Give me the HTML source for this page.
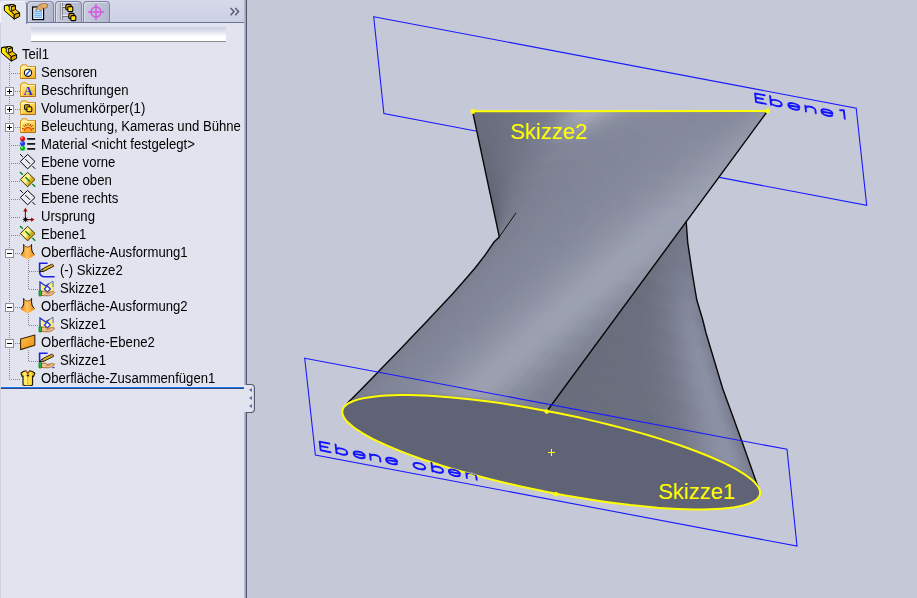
<!DOCTYPE html>
<html><head><meta charset="utf-8"><title>SolidWorks</title>
<style>
*{margin:0;padding:0;box-sizing:border-box}
html,body{width:917px;height:598px;overflow:hidden;background:#c5c9d7;font-family:"Liberation Sans",sans-serif}
#panel{position:absolute;left:0;top:0;width:244px;height:598px;background:#e1e4ee;overflow:hidden}
#tabs{position:absolute;left:0;top:0;width:244px;height:22px;background:linear-gradient(#d6d9e9,#cdd1e5)}
#tabline{position:absolute;left:26px;top:22px;width:218px;height:1px;background:#6a7492}
.tab{position:absolute;top:1px;height:21px;width:27px;border:1px solid #7f85a2;border-bottom:none;border-radius:4px 4px 0 0;background:linear-gradient(100deg,#cbcee0,#b3b7cb);box-shadow:inset 1px 1px 0 #d9dcea}
.tab.act{left:0;top:1px;width:27px;height:23px;background:linear-gradient(#e6e8f1,#e1e4ee);border-color:#f4f5fa #7f85a2 #e1e4ee #f4f5fa;box-shadow:none}
#search{position:absolute;left:31px;top:27px;width:195px;height:15px;background:linear-gradient(#cbcfe1 0%,#e2e5f0 35%,#ffffff 70%);border-bottom:1px solid #8c8c8c}
#edge1{position:absolute;left:244px;top:0;width:2px;height:598px;background:linear-gradient(90deg,#bcbfd2,#9a9db4)}
#edge2{position:absolute;left:246px;top:0;width:1px;height:598px;background:#4e5268}
#vpw{position:absolute;left:247px;top:0;width:670px;height:598px;background:#c5c9d7}
.t{position:absolute;font-size:14px;line-height:18px;height:18px;color:#000;white-space:nowrap;transform:scaleX(.937);transform-origin:0 0}
.ico{position:absolute;overflow:visible}
.hd{position:absolute;height:1px;background:repeating-linear-gradient(90deg,#858890 0 1px,transparent 1px 2px)}
.vd{position:absolute;width:1px;background:repeating-linear-gradient(180deg,#858890 0 1px,transparent 1px 2px)}
.exp{position:absolute;left:5px;width:9px;height:9px;border:1px solid #8a8e9c;background:#fff}
.exp .h{position:absolute;left:1px;top:3px;width:5px;height:1px;background:#000}
.exp .v{position:absolute;left:3px;top:1px;width:1px;height:5px;background:#000}
#lstrip{position:absolute;left:0;top:23px;width:1px;height:575px;background:#ced1e3}
#bline{position:absolute;left:1px;top:387px;width:244px;height:2px;background:linear-gradient(#1c74ec 0 50%,#2f4a86 50% 100%);box-shadow:0 -1px 0 #e9ebf3}
#hbg{position:absolute;left:244px;top:385px;width:3px;height:27px;background:#e1e4ee}
#handle{position:absolute;left:246px;top:384px;width:9px;height:29px;background:#e1e4ee;border:1px solid #565a70;border-left:none;border-radius:0 4px 4px 0;box-shadow:inset -1px 0 0 #c9ccda}
#handle i{position:absolute;left:3px;width:0;height:0;border:2.7px solid transparent;border-right:3.6px solid #6668aa;border-left:none}
#chev{position:absolute;left:229px;top:3px;font-size:15px;line-height:16px;color:#50546a}
</style></head><body>
<svg width="0" height="0" style="position:absolute"><defs>
<linearGradient id="py" x1="0" y1="0" x2="1" y2="1"><stop offset="0" stop-color="#fff600"/><stop offset=".5" stop-color="#ffe000"/><stop offset="1" stop-color="#eeb000"/></linearGradient>
<linearGradient id="fg" x1="0" y1="0" x2=".6" y2="1"><stop offset="0" stop-color="#fff3a8"/><stop offset=".5" stop-color="#ffdc5c"/><stop offset="1" stop-color="#f6b83a"/></linearGradient>
<linearGradient id="pg" x1="0" y1=".2" x2="1" y2=".8"><stop offset="0" stop-color="#ffe23a"/><stop offset=".45" stop-color="#fff6a0"/><stop offset=".7" stop-color="#d8a80a"/><stop offset="1" stop-color="#f6cc1a"/></linearGradient>
<linearGradient id="og" x1="0" y1="0" x2="1" y2="0"><stop offset="0" stop-color="#f07a00"/><stop offset=".45" stop-color="#ffc666"/><stop offset="1" stop-color="#f08200"/></linearGradient>
<linearGradient id="og2" x1="0" y1="0" x2="1" y2="1"><stop offset="0" stop-color="#ffc252"/><stop offset="1" stop-color="#ee8c0c"/></linearGradient>
<linearGradient id="kg" x1="0" y1="0" x2="1" y2="0"><stop offset="0" stop-color="#e6b400"/><stop offset=".3" stop-color="#fff27a"/><stop offset=".7" stop-color="#ffe23a"/><stop offset="1" stop-color="#d8a000"/></linearGradient>
<symbol id="i-part" viewBox="0 0 16 16" overflow="visible">
<g transform="translate(-1,-2)" stroke="#000" stroke-width="1" stroke-linejoin="round">
<path d="M1.4 3.9L4.2 3.1 6.4 5V7.8L11.2 12.6 16.6 10.8 12.5 7.4V3.8L10.4 2.5H6.6L6.2 3.1 4.2 3.1" fill="#f6c400"/>
<path d="M1.4 3.9V8.6L11.2 17.2V12.6L6.4 7.8V5L4.2 3.1Z" fill="url(#py)"/>
<path d="M11.2 12.6V17.2L16.6 14.4V10.8Z" fill="#dea400"/>
<path d="M6.6 2.6H10.4L12.5 3.8 8.2 4.7Z" fill="#fff21a"/>
<path d="M8.2 4.7L12.5 3.8V7.4L8.2 9.4Z" fill="#eeb400"/>
<path d="M6.6 2.6L8.2 4.7V9.4L6.4 7.8V5Z" fill="#fffbc8" stroke-width=".6"/>
</g>
<circle cx="9.6" cy="1.6" r=".5" fill="#5a3c00"/><circle cx="12.4" cy="9.4" r=".55" fill="#5a3c00"/><circle cx="10.2" cy="5.4" r=".5" fill="#5a3c00"/></symbol><symbol id="i-fold-sens" viewBox="0 0 16 16" overflow="visible">
<path d="M0.5 14.5V2.5H1.5L2 0.8H6.5L7.5 2.5H15.5V14.5Z" fill="url(#fg)" stroke="#d8942a" stroke-width="1"/>
<path d="M0.5 14.5H15.5V2.5" fill="none" stroke="#b46e14" stroke-width="1"/>
<path d="M1.5 13.5V3.5H14.5" fill="none" stroke="#fff6c0" stroke-width="1" opacity=".9"/>

<circle cx="8" cy="8.8" r="3.6" fill="#fff" stroke="#111" stroke-width="1.1"/>
<path d="M6 11L10.2 6.2" stroke="#1c50e0" stroke-width="1.3"/></symbol><symbol id="i-fold-a" viewBox="0 0 16 16" overflow="visible">
<path d="M0.5 14.5V2.5H1.5L2 0.8H6.5L7.5 2.5H15.5V14.5Z" fill="url(#fg)" stroke="#d8942a" stroke-width="1"/>
<path d="M0.5 14.5H15.5V2.5" fill="none" stroke="#b46e14" stroke-width="1"/>
<path d="M1.5 13.5V3.5H14.5" fill="none" stroke="#fff6c0" stroke-width="1" opacity=".9"/>

<text x="8" y="13.4" text-anchor="middle" font-family="Liberation Serif, serif" font-weight="bold" font-size="12.5" fill="#1a34d8">A</text></symbol><symbol id="i-fold-vol" viewBox="0 0 16 16" overflow="visible">
<path d="M0.5 14.5V2.5H1.5L2 0.8H6.5L7.5 2.5H15.5V14.5Z" fill="url(#fg)" stroke="#d8942a" stroke-width="1"/>
<path d="M0.5 14.5H15.5V2.5" fill="none" stroke="#b46e14" stroke-width="1"/>
<path d="M1.5 13.5V3.5H14.5" fill="none" stroke="#fff6c0" stroke-width="1" opacity=".9"/>

<rect x="4.6" y="4.8" width="5" height="5" rx="1.2" fill="#f2b400" stroke="#111" stroke-width="1.1"/>
<rect x="6.8" y="6.8" width="5" height="5" rx="1.2" fill="#ffd41a" stroke="#111" stroke-width="1.1"/></symbol><symbol id="i-fold-light" viewBox="0 0 16 16" overflow="visible">
<path d="M0.5 14.5V2.5H1.5L2 0.8H6.5L7.5 2.5H15.5V14.5Z" fill="url(#fg)" stroke="#d8942a" stroke-width="1"/>
<path d="M0.5 14.5H15.5V2.5" fill="none" stroke="#b46e14" stroke-width="1"/>
<path d="M1.5 13.5V3.5H14.5" fill="none" stroke="#fff6c0" stroke-width="1" opacity=".9"/>

<path d="M3.6 13.2A4.4 4.4 0 0 1 12.4 13.2Z" fill="#f04a10"/>
<path d="M5 13.2A3 3 0 0 1 11 13.2Z" fill="#ffb020"/>
<g stroke="#7a2a00" stroke-width=".9"><path d="M8 7.6V5.2M5 8.8L3.4 7M11 8.8L12.6 7M3.8 11L2 10.2M12.2 11L14 10.2M6.2 8L5.4 6M9.8 8L10.6 6"/></g></symbol><symbol id="i-mat" viewBox="0 0 16 16" overflow="visible">
<circle cx="2.6" cy="2.7" r="2.5" fill="#e01010"/><circle cx="1.9" cy="1.9" r=".9" fill="#ff9a9a"/>
<circle cx="2.6" cy="7.4" r="2.5" fill="#1838e0"/><circle cx="1.9" cy="6.6" r=".9" fill="#9ab0ff"/>
<circle cx="2.6" cy="12.2" r="2.5" fill="#10b020"/><circle cx="1.9" cy="11.4" r=".9" fill="#a0ffa8"/>
<g fill="#1a1a1a"><rect x="7.2" y="2" width="8" height="1.8"/><rect x="7.2" y="7" width="8" height="1.8"/><rect x="7.2" y="12" width="8" height="1.8"/></g></symbol><symbol id="i-plane" viewBox="0 0 16 16" overflow="visible">
<path d="M7.6 .4L15 7.5 7.6 14.8.3 7.5Z" fill="#e9ebf3" stroke="#000" stroke-width="1"/>
<path d="M0 0L2.8 2.8M5.4 5.2L10 9.8M12.4 12L15.2 14.8" stroke="#000" stroke-width="1"/></symbol><symbol id="i-planey" viewBox="0 0 16 16" overflow="visible">
<path d="M7.6 .4L15 7.5 7.6 14.8.3 7.5Z" fill="url(#pg)" stroke="#3a3000" stroke-width="1"/>
<path d="M0 0L2.8 2.8M5.4 5.2L10 9.8M12.4 12L15.2 14.8" stroke="#0a8a1a" stroke-width="1.5"/></symbol><symbol id="i-origin" viewBox="0 0 16 16" overflow="visible">
<g stroke="#8a0a0a" stroke-width="1.1" fill="#a00c0c">
<path d="M5.4 11.6V1.5M5.4 11.6H13"/>
<path d="M5.4 -.2L3.2 3.4H7.6Z" stroke="none"/><path d="M14.6 11.6L11 9.4V13.8Z" stroke="none"/></g>
<path d="M2.8 11.6H8M5.4 9V14.2M3.5 9.7L7.3 13.5M7.3 9.7L3.5 13.5" stroke="#000" stroke-width=".9"/></symbol><symbol id="i-loft" viewBox="0 0 16 16" overflow="visible">
<path d="M3.6 .3C4.6 2.2 5.8 3 7.6 3 9.4 3 10.6 2.2 11.6 .3 11.6 3 11.4 5 12 7 12.8 9 14.2 10 15 11 12.4 13 10 14.2 7.6 15.7 5.2 14.2 2.8 13 .6 11 1.4 10 2.6 9 3.4 7 4 5 3.6 3 3.6 .3Z" fill="url(#og)"/>
<path d="M3.6 .3C3.6 3 4 5 3.4 7 2.8 8.6 2 9.6 1.2 10.4M11.6 .3C11.6 3 11.4 5 12 7 12.6 8.6 13.4 9.6 14.4 10.4" fill="none" stroke="#111" stroke-width="1"/>
<path d="M3.6 .3C4.6 2.2 5.8 3 7.6 3 9.4 3 10.6 2.2 11.6 .3" fill="none" stroke="#3a2a10" stroke-width=".7"/></symbol><symbol id="i-sk2" viewBox="0 0 16 16" overflow="visible">
<path d="M9.6 1.2H1.6V9.5C1.6 13 3.6 14.8 7 14.8H16.6" fill="none" stroke="#1a1ee6" stroke-width="1.6"/>
<path d="M2 9.6L4.2 7 14.2 2 15.9 4.1 5.6 9.4Z" fill="#ffd61a" stroke="#000" stroke-width=".9" stroke-linejoin="round"/>
<path d="M13.1 2.6L14.2 2 15.9 4.1 14.8 4.7Z" fill="#f08a78" stroke="#7a3a30" stroke-width=".5"/>
<path d="M2 9.6L4.2 7 5.6 9.4Z" fill="#f0d8b0" stroke="#000" stroke-width=".7"/>
<path d="M5.2 8.2L14.4 3.4" stroke="#c89000" stroke-width=".7"/>
</symbol><symbol id="i-sk1" viewBox="0 0 16 16" overflow="visible">
<path d="M2 2L7.6 6 15 1.2 15.4 13.2H2Z" fill="#fff27a" stroke="#d8c23a" stroke-width=".6"/>
<path d="M2 12V2L7.6 6 11 3.8" fill="none" stroke="#1a2ee0" stroke-width="1.3"/><path d="M11 3.8L15 1.2V7" fill="none" stroke="#3a5ae0" stroke-width=".8"/>
<path d="M9.4 6L12.4 9 9.4 12 6.4 9Z" fill="#fff" stroke="#1a2ee0" stroke-width="1.2"/>
<path d="M3.2 11.6C6 10.6 8 11.4 9.6 12.4 12 11.6 15.6 11.4 16.6 12.2 16.8 13.2 13 15.6 10.4 15.8 7.6 16 5.4 15.4 3.2 15.4Z" fill="#ecc096" stroke="#a8642a" stroke-width=".9" stroke-linejoin="round"/>
<path d="M8 13.2C9.6 13.6 11 13.4 12.4 12.8" fill="none" stroke="#a8642a" stroke-width=".7"/>
<rect x="1" y="10.4" width="2.4" height="5.6" rx=".6" fill="#22c040" stroke="#0c6a20" stroke-width=".8"/>
</symbol><symbol id="i-surf" viewBox="0 0 16 16" overflow="visible">
<path d="M.6 5L14.8 1V11.2L.6 15.6Z" fill="url(#og2)" stroke="#3a2808" stroke-width="1.1" stroke-linejoin="round"/></symbol><symbol id="i-sk3" viewBox="0 0 16 16" overflow="visible">
<path d="M9.6 1.2H1.6V10.5" fill="none" stroke="#1a1ee6" stroke-width="1.6"/>
<path d="M14.5 15.6H16.4" stroke="#1a1ee6" stroke-width="1.2"/>
<path d="M2 9.6L4.2 7 14.2 2 15.9 4.1 5.6 9.4Z" fill="#ffd61a" stroke="#000" stroke-width=".9" stroke-linejoin="round"/>
<path d="M13.1 2.6L14.2 2 15.9 4.1 14.8 4.7Z" fill="#f08a78" stroke="#7a3a30" stroke-width=".5"/>
<path d="M2 9.6L4.2 7 5.6 9.4Z" fill="#f0d8b0" stroke="#000" stroke-width=".7"/>
<path d="M5.2 8.2L14.4 3.4" stroke="#c89000" stroke-width=".7"/>

<path d="M3.2 11.6C6 10.6 8 11.4 9.6 12.4 12 11.6 15.6 11.4 16.6 12.2 16.8 13.2 13 15.6 10.4 15.8 7.6 16 5.4 15.4 3.2 15.4Z" fill="#ecc096" stroke="#a8642a" stroke-width=".9" stroke-linejoin="round"/>
<path d="M8 13.2C9.6 13.6 11 13.4 12.4 12.8" fill="none" stroke="#a8642a" stroke-width=".7"/>
<rect x="1" y="10.4" width="2.4" height="5.6" rx=".6" fill="#22c040" stroke="#0c6a20" stroke-width=".8"/>
</symbol><symbol id="i-knit" viewBox="0 0 16 16" overflow="visible">
<path d="M1 3.2C2.6 1.6 4.4 1 6 .8L7.8 3.6 9.6.8C11.2 1 13 1.6 14.8 3.2L13.6 6.4 12.6 6V15C10 16 5.6 16 3 15V6L2 6.4Z" fill="url(#kg)" stroke="#1a1400" stroke-width="1.1" stroke-linejoin="round"/>
<path d="M6 .8L7.8 4.6 9.6.8" fill="none" stroke="#e86a10" stroke-width="1"/>
<path d="M7.8 5V15.6" stroke="#f08a1a" stroke-width="1.2" stroke-dasharray="1 .6"/>
<rect x="6.6" y="4.8" width="2.6" height="1.6" fill="#222"/></symbol><symbol id="i-tab-prop" viewBox="0 0 16 16" overflow="visible">
<rect x="1.6" y="4" width="11" height="12.6" fill="#dff0ff" stroke="#000" stroke-width="1.2"/>
<path d="M3.4 8.2H11M3.4 10.2H11M3.4 12.2H11M3.4 14.2H11" stroke="#4a9af0" stroke-width="1"/>
<path d="M4.4 6.6L8.6 1.6C10.6.4 14.2.2 16.6 1.2L16.2 4.6C14.2 5.4 12.6 5.2 11.4 5.6L9.8 7.8 7.2 5.6 5 7.4Z" fill="#e6b274" stroke="#8a5a2a" stroke-width=".7" stroke-linejoin="round"/>
<path d="M8.6 1.6L12 5.4" stroke="#b07a3e" stroke-width="2.2" stroke-dasharray=".8 .8" opacity=".6"/></symbol><symbol id="i-tab-conf" viewBox="0 0 16 16" overflow="visible">
<path d="M2.4 0V17" stroke="#8a8a92" stroke-width="1"/><path d="M3.4 0V17" stroke="#fff" stroke-width="1"/><path d="M4.3 0V17" stroke="#5a5a62" stroke-width=".8"/>
<path d="M4.5 4.4H9M4.5 13.3H12" stroke="#5a5a62" stroke-width="1.1"/><path d="M4.5 3.5H9M4.5 12.4H12" stroke="#fff" stroke-width=".9"/>
<rect x="7.8" y="1.4" width="5.4" height="5.4" rx="1.3" fill="#f0a000" stroke="#000" stroke-width="1.1"/>
<rect x="9.8" y="3.6" width="5" height="5" rx="1" fill="#ffe21a" stroke="#000" stroke-width="1.1"/>
<rect x="10.8" y="10.4" width="5.4" height="5.4" rx="1.3" fill="#f0a000" stroke="#000" stroke-width="1.1"/>
<rect x="12.8" y="12.6" width="5" height="5" rx="1" fill="#ffe21a" stroke="#000" stroke-width="1.1"/></symbol><symbol id="i-tab-dim" viewBox="0 0 16 16" overflow="visible">
<g fill="none" stroke="#d45ae0" stroke-width="1.5"><circle cx="8" cy="8" r="5"/><path d="M8 0V16M0 8H16"/></g></symbol></defs></svg>
<div id="vpw">
<svg id="vp" width="670" height="598" viewBox="247 0 670 598">
<defs>
<linearGradient id="g1" gradientUnits="userSpaceOnUse" x1="400" y1="180" x2="700" y2="400">
<stop offset="0" stop-color="#6d7184"/><stop offset="0.25" stop-color="#7e8297"/><stop offset="0.55" stop-color="#888ca2"/><stop offset="1" stop-color="#7f8399"/>
</linearGradient>
<linearGradient id="g2" gradientUnits="userSpaceOnUse" x1="600" y1="380" x2="760" y2="380">
<stop offset="0" stop-color="#64687a"/><stop offset="0.45" stop-color="#6c7083"/><stop offset="0.75" stop-color="#858a9e"/><stop offset="1" stop-color="#6d7185"/>
</linearGradient>
<clipPath id="ce"><polygon points="758.0,491.4 758.0,493.5 757.4,495.5 756.2,497.3 754.4,499.1 752.2,500.7 749.3,502.1 745.9,503.5 742.0,504.7 737.6,505.7 732.6,506.6 727.2,507.4 721.2,508.0 714.8,508.5 708.0,508.8 700.7,508.9 693.0,508.9 684.9,508.7 676.5,508.4 667.7,507.9 658.6,507.3 649.2,506.5 639.5,505.6 629.6,504.5 619.5,503.3 609.2,502.0 598.7,500.5 588.1,498.8 577.4,497.1 566.6,495.2 555.8,493.2 545.0,491.1 534.2,488.9 523.4,486.6 512.7,484.2 502.1,481.7 491.7,479.1 481.4,476.5 471.3,473.8 461.4,471.0 451.8,468.2 442.4,465.3 433.4,462.4 424.6,459.5 416.2,456.6 408.2,453.6 400.6,450.6 393.4,447.7 386.6,444.7 380.3,441.8 374.4,438.9 369.0,436.0 364.1,433.2 359.8,430.5 355.9,427.8 352.6,425.1 349.9,422.6 347.7,420.1 346.0,417.7 344.9,415.4 344.4,413.2 344.4,411.1 345.0,409.1 346.2,407.3 348.0,405.5 350.2,403.9 353.1,402.5 356.5,401.1 360.4,399.9 364.8,398.9 369.8,398.0 375.2,397.2 381.2,396.6 387.6,396.1 394.4,395.8 401.7,395.7 409.4,395.7 417.5,395.9 425.9,396.2 434.7,396.7 443.8,397.3 453.2,398.1 462.9,399.0 472.8,400.1 482.9,401.3 493.2,402.6 503.7,404.1 514.3,405.8 525.0,407.5 535.8,409.4 546.6,411.4 557.4,413.5 568.2,415.7 579.0,418.0 589.7,420.4 600.3,422.9 610.7,425.5 621.0,428.1 631.1,430.8 641.0,433.6 650.6,436.4 660.0,439.3 669.0,442.2 677.8,445.1 686.2,448.0 694.2,451.0 701.8,454.0 709.0,456.9 715.8,459.9 722.1,462.8 728.0,465.7 733.4,468.6 738.3,471.4 742.6,474.1 746.5,476.8 749.8,479.5 752.5,482.0 754.7,484.5 756.4,486.9 757.5,489.2 758.0,491.4"/></clipPath><clipPath id="co"><path clip-rule="evenodd" d="M250 300H900V598H250ZM758.0 491.4 L758.0 493.5 L757.4 495.5 L756.2 497.3 L754.4 499.1 L752.2 500.7 L749.3 502.1 L745.9 503.5 L742.0 504.7 L737.6 505.7 L732.6 506.6 L727.2 507.4 L721.2 508.0 L714.8 508.5 L708.0 508.8 L700.7 508.9 L693.0 508.9 L684.9 508.7 L676.5 508.4 L667.7 507.9 L658.6 507.3 L649.2 506.5 L639.5 505.6 L629.6 504.5 L619.5 503.3 L609.2 502.0 L598.7 500.5 L588.1 498.8 L577.4 497.1 L566.6 495.2 L555.8 493.2 L545.0 491.1 L534.2 488.9 L523.4 486.6 L512.7 484.2 L502.1 481.7 L491.7 479.1 L481.4 476.5 L471.3 473.8 L461.4 471.0 L451.8 468.2 L442.4 465.3 L433.4 462.4 L424.6 459.5 L416.2 456.6 L408.2 453.6 L400.6 450.6 L393.4 447.7 L386.6 444.7 L380.3 441.8 L374.4 438.9 L369.0 436.0 L364.1 433.2 L359.8 430.5 L355.9 427.8 L352.6 425.1 L349.9 422.6 L347.7 420.1 L346.0 417.7 L344.9 415.4 L344.4 413.2 L344.4 411.1 L345.0 409.1 L346.2 407.3 L348.0 405.5 L350.2 403.9 L353.1 402.5 L356.5 401.1 L360.4 399.9 L364.8 398.9 L369.8 398.0 L375.2 397.2 L381.2 396.6 L387.6 396.1 L394.4 395.8 L401.7 395.7 L409.4 395.7 L417.5 395.9 L425.9 396.2 L434.7 396.7 L443.8 397.3 L453.2 398.1 L462.9 399.0 L472.8 400.1 L482.9 401.3 L493.2 402.6 L503.7 404.1 L514.3 405.8 L525.0 407.5 L535.8 409.4 L546.6 411.4 L557.4 413.5 L568.2 415.7 L579.0 418.0 L589.7 420.4 L600.3 422.9 L610.7 425.5 L621.0 428.1 L631.1 430.8 L641.0 433.6 L650.6 436.4 L660.0 439.3 L669.0 442.2 L677.8 445.1 L686.2 448.0 L694.2 451.0 L701.8 454.0 L709.0 456.9 L715.8 459.9 L722.1 462.8 L728.0 465.7 L733.4 468.6 L738.3 471.4 L742.6 474.1 L746.5 476.8 L749.8 479.5 L752.5 482.0 L754.7 484.5 L756.4 486.9 L757.5 489.2 L758.0 491.4Z"/></clipPath><clipPath id="c1"><polygon points="472.6,111.3 767.6,111.0 546.7,411.5 546.6,410.9 539.7,409.7 532.9,408.5 526.1,407.3 519.4,406.2 512.6,405.1 505.9,404.0 499.3,403.1 492.7,402.1 486.2,401.3 479.8,400.5 473.4,399.7 467.1,399.0 460.9,398.3 454.8,397.8 448.8,397.2 442.9,396.8 437.1,396.3 431.4,396.0 425.9,395.7 420.5,395.5 415.3,395.3 410.1,395.2 405.2,395.1 400.4,395.1 395.7,395.2 391.3,395.3 387.0,395.5 382.8,395.8 378.9,396.1 375.1,396.5 371.5,396.9 368.1,397.4 364.9,397.9 361.9,398.6 359.2,399.2 356.6,399.9 354.2,400.7 352.0,401.6 350.1,402.4 348.3,403.4 346.8,404.4 345.5,405.4 344.4,406.5 343.5,407.7 342.9,408.8 342.5,410.1 342.3,411.4 342.3,412.7 342.5,414.1 343.0,415.5 347.3,403.2 358.9,391.7 372.7,377.6 386.3,363.6 399.7,349.7 413.0,335.7 426.2,321.9 439.3,308.1 452.0,294.4 464.1,280.8 475.5,267.5 485.6,254.4 494.0,242.0 499.3,236.9"/></clipPath><clipPath id="c2"><polygon points="767.6,111.0 686.2,221.9 687.7,242.3 692.2,272.5 696.8,300.0 702.8,320.0 706.0,333.0 722.5,388.0 742.7,443.4 756.3,482.0 758.5,487.5 760.0,491.0 759.6,489.6 759.0,488.3 758.2,486.9 757.3,485.5 756.1,484.0 754.7,482.5 753.2,481.0 751.4,479.4 749.5,477.9 747.3,476.3 745.0,474.6 742.5,473.0 739.8,471.3 736.9,469.7 733.8,468.0 730.6,466.2 727.2,464.5 723.6,462.8 719.8,461.0 715.9,459.3 711.9,457.5 707.7,455.7 703.3,454.0 698.8,452.2 694.1,450.4 689.3,448.6 684.4,446.9 679.3,445.1 674.1,443.4 668.8,441.6 663.4,439.9 657.9,438.2 652.3,436.4 646.6,434.7 640.8,433.1 634.9,431.4 628.9,429.8 622.8,428.1 616.7,426.5 610.5,425.0 604.3,423.4 598.0,421.9 591.7,420.4 585.3,419.0 578.9,417.5 572.4,416.2 566.0,414.8 559.5,413.5 553.0,412.2 546.6,410.9"/></clipPath>
<filter id="sm" filterUnits="userSpaceOnUse" x="280" y="40" width="560" height="520"><feGaussianBlur stdDeviation="2"/><feComponentTransfer><feFuncA type="linear" slope="60"/></feComponentTransfer></filter><filter id="bl" x="-50%" y="-50%" width="200%" height="200%"><feGaussianBlur stdDeviation="14"/></filter>
</defs>
<!-- top plane (behind body) -->
<polygon points="373.7,16.7 856.2,108.1 866.7,205.4 383.9,113.5" fill="none" stroke="#1a1aff" stroke-width="1.1"/>
<!-- shaded loft surfaces (ruled-surface mesh) -->
<polygon points="767.6,111.0 686.2,221.9 687.7,242.3 692.2,272.5 696.8,300.0 702.8,320.0 706.0,333.0 722.5,388.0 742.7,443.4 756.3,482.0 758.5,487.5 760.0,491.0 759.6,489.6 759.0,488.3 758.2,486.9 757.3,485.5 756.1,484.0 754.7,482.5 753.2,481.0 751.4,479.4 749.5,477.9 747.3,476.3 745.0,474.6 742.5,473.0 739.8,471.3 736.9,469.7 733.8,468.0 730.6,466.2 727.2,464.5 723.6,462.8 719.8,461.0 715.9,459.3 711.9,457.5 707.7,455.7 703.3,454.0 698.8,452.2 694.1,450.4 689.3,448.6 684.4,446.9 679.3,445.1 674.1,443.4 668.8,441.6 663.4,439.9 657.9,438.2 652.3,436.4 646.6,434.7 640.8,433.1 634.9,431.4 628.9,429.8 622.8,428.1 616.7,426.5 610.5,425.0 604.3,423.4 598.0,421.9 591.7,420.4 585.3,419.0 578.9,417.5 572.4,416.2 566.0,414.8 559.5,413.5 553.0,412.2 546.6,410.9" fill="#6c7084"/><polygon points="472.6,111.3 767.6,111.0 546.7,411.5 546.6,410.9 539.7,409.7 532.9,408.5 526.1,407.3 519.4,406.2 512.6,405.1 505.9,404.0 499.3,403.1 492.7,402.1 486.2,401.3 479.8,400.5 473.4,399.7 467.1,399.0 460.9,398.3 454.8,397.8 448.8,397.2 442.9,396.8 437.1,396.3 431.4,396.0 425.9,395.7 420.5,395.5 415.3,395.3 410.1,395.2 405.2,395.1 400.4,395.1 395.7,395.2 391.3,395.3 387.0,395.5 382.8,395.8 378.9,396.1 375.1,396.5 371.5,396.9 368.1,397.4 364.9,397.9 361.9,398.6 359.2,399.2 356.6,399.9 354.2,400.7 352.0,401.6 350.1,402.4 348.3,403.4 346.8,404.4 345.5,405.4 344.4,406.5 343.5,407.7 342.9,408.8 342.5,410.1 342.3,411.4 342.3,412.7 342.5,414.1 343.0,415.5 347.3,403.2 358.9,391.7 372.7,377.6 386.3,363.6 399.7,349.7 413.0,335.7 426.2,321.9 439.3,308.1 452.0,294.4 464.1,280.8 475.5,267.5 485.6,254.4 494.0,242.0 499.3,236.9" fill="#80849a"/>
<g clip-path="url(#c2)"><g filter="url(#sm)" fill="currentColor" stroke="currentColor" stroke-width="0.8" stroke-linejoin="round"><path color="#696d7c" d="M472.5 111.3L477.7 111.3L483.3 135.3L477.7 135.2Z"/><path color="#696d7c" d="M477.7 135.2L483.3 135.3L489 159.4L482.9 159.1Z"/><path color="#696d7c" d="M482.9 159.1L489 159.4L494.6 183.4L488.1 183Z"/><path color="#696d7c" d="M488.1 183L494.6 183.4L500.2 207.5L493.3 206.9Z"/><path color="#696d7c" d="M493.3 206.9L500.2 207.5L505.8 231.5L498.5 230.8Z"/><path color="#696d7c" d="M477.7 111.3L483 111.3L489 135.4L483.3 135.3Z"/><path color="#696d7c" d="M483.3 135.3L489 135.4L495 159.6L489 159.4Z"/><path color="#696d7c" d="M489 159.4L495 159.6L501 183.8L494.6 183.4Z"/><path color="#696d7c" d="M483 111.3L488.3 111.3L494.7 135.5L489 135.4Z"/><path color="#696d7c" d="M489 135.4L494.7 135.5L501.1 159.8L495 159.6Z"/><path color="#696d7c" d="M535 398.2L545.1 399.8L550.7 423.9L540.2 422.1Z"/><path color="#696d7c" d="M488.3 111.3L493.5 111.3L500.3 135.7L494.7 135.5Z"/><path color="#696d7c" d="M494.7 135.5L500.3 135.7L507.1 160L501.1 159.8Z"/><path color="#696d7c" d="M545.1 399.8L555.1 401.3L561.1 425.5L550.7 423.9Z"/><path color="#696d7c" d="M550.6 470L561.9 472L567.5 496L555.8 493.9Z"/><path color="#696d7c" d="M555.1 401.3L565.1 402.7L571.5 427L561.1 425.5Z"/><path color="#696d7c" d="M561.9 472L573.2 473.9L579.2 498L567.5 496Z"/><path color="#696d7c" d="M493.5 111.3L498.8 111.2L506 135.7L500.3 135.7Z"/><path color="#696d7c" d="M573.2 473.9L584.3 475.6L590.7 499.9L579.2 498Z"/><path color="#696d7c" d="M565.1 402.7L575 404L581.8 428.4L571.5 427Z"/><path color="#696d7c" d="M584.3 475.6L595.4 477.2L602.2 501.6L590.7 499.9Z"/><path color="#696d7c" d="M498.8 111.2L504.1 111.2L511.6 135.8L506 135.7Z"/><path color="#696d7c" d="M575 404L584.8 405.2L592 429.7L581.8 428.4Z"/><path color="#696d7c" d="M595.4 477.2L606.3 478.7L613.5 503.2L602.2 501.6Z"/><path color="#696d7c" d="M584.8 405.2L594.4 406.2L602 430.8L592 429.7Z"/><path color="#696d7c" d="M504.1 111.2L509.4 111.2L517.2 135.9L511.6 135.8Z"/><path color="#696d7c" d="M606.3 478.7L617 480L624.5 504.6L613.5 503.2Z"/><path color="#696d7c" d="M594.4 406.2L603.9 407.2L611.8 431.8L602 430.8Z"/><path color="#696d7c" d="M617 480L627.5 481.1L635.4 505.8L624.5 504.6Z"/><path color="#696d7c" d="M509.4 111.2L514.6 111.2L522.8 136L517.2 135.9Z"/><path color="#696d7c" d="M603.9 407.2L613.1 408L621.4 432.7L611.8 431.8Z"/><path color="#696d7c" d="M627.5 481.1L637.8 482.1L646 506.9L635.4 505.8Z"/><path color="#696d7c" d="M514.6 111.2L519.9 111.2L528.4 136L522.8 136Z"/><path color="#696d7c" d="M613.1 408L622.2 408.6L630.7 433.4L621.4 432.7Z"/><path color="#696d7c" d="M637.8 482.1L647.8 483L656.3 507.8L646 506.9Z"/><path color="#696d7c" d="M519.9 111.2L525.2 111.2L534 136.1L528.4 136Z"/><path color="#696d7c" d="M622.2 408.6L631 409.2L639.8 434L630.7 433.4Z"/><path color="#696d7c" d="M525.2 111.2L530.4 111.2L539.5 136.1L534 136.1Z"/><path color="#696d7c" d="M647.8 483L657.4 483.6L666.2 508.5L656.3 507.8Z"/><path color="#696d7c" d="M530.4 111.2L535.7 111.2L545 136.1L539.5 136.1Z"/><path color="#696d7c" d="M631 409.2L639.5 409.6L648.6 434.4L639.8 434Z"/><path color="#696d7c" d="M639.8 434L648.6 434.4L657.7 459.3L648.6 458.8Z"/><path color="#696d7c" d="M657.4 483.6L666.7 484.1L675.8 509L666.2 508.5Z"/><path color="#696d7c" d="M535.7 111.2L541 111.2L550.5 136.1L545 136.1Z"/><path color="#696d7c" d="M648.6 434.4L657 434.7L666.4 459.6L657.7 459.3Z"/><path color="#696d7c" d="M666.7 484.1L675.7 484.5L685 509.4L675.8 509Z"/><path color="#696d7c" d="M541 111.2L546.2 111.2L556 136.1L550.5 136.1Z"/><path color="#696d7c" d="M657 434.7L665.2 434.9L674.7 459.8L666.4 459.6Z"/><path color="#696d7c" d="M546.2 111.2L551.5 111.2L561.4 136.1L556 136.1Z"/><path color="#696d7c" d="M675.7 484.5L684.3 484.7L693.8 509.5L685 509.4Z"/><path color="#696d7c" d="M551.5 111.2L556.8 111.2L566.8 136.1L561.4 136.1Z"/><path color="#696d7c" d="M665.2 434.9L672.9 434.9L682.7 459.8L674.7 459.8Z"/><path color="#696d7c" d="M684.3 484.7L692.4 484.7L702.2 509.6L693.8 509.5Z"/><path color="#696d7c" d="M556.8 111.2L562 111.2L572.2 136L566.8 136.1Z"/><path color="#696d7c" d="M672.9 434.9L680.3 434.7L690.2 459.6L682.7 459.8Z"/><path color="#696d7c" d="M562 111.2L567.3 111.2L577.5 136L572.2 136Z"/><path color="#696d7c" d="M692.4 484.7L700.1 484.5L710 509.4L702.2 509.6Z"/><path color="#696d7c" d="M567.3 111.2L572.6 111.2L582.8 135.9L577.5 136Z"/><path color="#696d7c" d="M680.3 434.7L687.3 434.4L697.3 459.3L690.2 459.6Z"/><path color="#696d7c" d="M700.1 484.5L707.3 484.1L717.4 509L710 509.4Z"/><path color="#696d7c" d="M572.6 111.2L577.9 111.2L588.1 135.8L582.8 135.9Z"/><path color="#696d7c" d="M687.3 434.4L693.8 434L704 458.8L697.3 459.3Z"/><path color="#696d7c" d="M577.9 111.2L583.1 111.2L593.3 135.8L588.1 135.8Z"/><path color="#696d7c" d="M707.3 484.1L714.1 483.6L724.2 508.5L717.4 509Z"/><path color="#696d7c" d="M583.1 111.2L588.4 111.2L598.5 135.7L593.3 135.8Z"/><path color="#696d7c" d="M693.8 434L699.9 433.4L710.1 458.2L704 458.8Z"/><path color="#696d7c" d="M588.4 111.2L593.7 111.2L603.6 135.6L598.5 135.7Z"/><path color="#696d7c" d="M714.1 483.6L720.3 483L730.5 507.8L724.2 508.5Z"/><path color="#696d7c" d="M593.7 111.2L598.9 111.2L608.7 135.5L603.6 135.6Z"/><path color="#696d7c" d="M699.9 433.4L705.6 432.7L715.8 457.4L710.1 458.2Z"/><path color="#696d7c" d="M710.1 458.2L715.8 457.4L726 482.1L720.3 483Z"/><path color="#696d7c" d="M720.3 483L726 482.1L736.3 506.9L730.5 507.8Z"/><path color="#696d7c" d="M598.9 111.2L604.2 111.2L613.8 135.3L608.7 135.5Z"/><path color="#696d7c" d="M604.2 111.2L609.5 111.1L618.8 135.2L613.8 135.3Z"/><path color="#696d7c" d="M715.8 457.4L721 456.5L731.2 481.1L726 482.1Z"/><path color="#696d7c" d="M726 482.1L731.2 481.1L741.4 505.8L736.3 506.9Z"/><path color="#696d7c" d="M609.5 111.1L614.7 111.1L623.8 135.1L618.8 135.2Z"/><path color="#696d7c" d="M614.7 111.1L620 111.1L628.8 134.9L623.8 135.1Z"/><path color="#696d7c" d="M721 456.5L725.6 455.4L735.8 480L731.2 481.1Z"/><path color="#696d7c" d="M731.2 481.1L735.8 480L745.9 504.6L741.4 505.8Z"/><path color="#696d7c" d="M620 111.1L625.3 111.1L633.7 134.8L628.8 134.9Z"/><path color="#696d7c" d="M625.3 111.1L630.6 111.1L638.5 134.6L633.7 134.8Z"/><path color="#696d7c" d="M725.6 455.4L729.7 454.2L739.8 478.7L735.8 480Z"/><path color="#696d7c" d="M735.8 480L739.8 478.7L749.9 503.2L745.9 504.6Z"/><path color="#696d7c" d="M630.6 111.1L635.8 111.1L643.4 134.4L638.5 134.6Z"/><path color="#696d7c" d="M729.7 454.2L733.3 452.8L743.2 477.2L739.8 478.7Z"/><path color="#696d7c" d="M635.8 111.1L641.1 111.1L648.1 134.3L643.4 134.4Z"/><path color="#696d7c" d="M739.8 478.7L743.2 477.2L753.2 501.6L749.9 503.2Z"/><path color="#696d7c" d="M641.1 111.1L646.4 111.1L652.9 134.1L648.1 134.3Z"/><path color="#696d7c" d="M733.3 452.8L736.3 451.3L746.1 475.6L743.2 477.2Z"/><path color="#696d7c" d="M646.4 111.1L651.6 111.1L657.6 133.9L652.9 134.1Z"/><path color="#696d7c" d="M743.2 477.2L746.1 475.6L755.9 499.9L753.2 501.6Z"/><path color="#696d7c" d="M651.6 111.1L656.9 111.1L662.3 133.7L657.6 133.9Z"/><path color="#696d7c" d="M656.9 111.1L662.2 111.1L666.9 133.5L662.3 133.7Z"/><path color="#696d7c" d="M746.1 475.6L748.3 473.9L757.9 498L755.9 499.9Z"/><path color="#696d7c" d="M662.2 111.1L667.4 111.1L671.5 133.3L666.9 133.5Z"/><path color="#696d7c" d="M667.4 111.1L672.7 111.1L676 133.1L671.5 133.3Z"/><path color="#696d7c" d="M748.3 473.9L749.9 472L759.3 496L757.9 498Z"/><path color="#696d7c" d="M672.7 111.1L678 111.1L680.5 132.9L676 133.1Z"/><path color="#696d7c" d="M678 111.1L683.3 111.1L685 132.7L680.5 132.9Z"/><path color="#696d7c" d="M749.9 472L750.9 470L760 493.9L759.3 496Z"/><path color="#696d7c" d="M683.3 111.1L688.5 111.1L689.5 132.5L685 132.7Z"/><path color="#696d7c" d="M741.9 446L742.6 444L751.3 467.8L750.9 470Z"/><path color="#696d7c" d="M688.5 111.1L693.8 111.1L693.9 132.3L689.5 132.5Z"/><path color="#696d7c" d="M733.8 420.3L734.3 418.3L742.7 441.9L742.6 444Z"/><path color="#696d7c" d="M750.9 470L751.3 467.8L760.1 491.6L760 493.9Z"/><path color="#696d7c" d="M693.8 111.1L699.1 111.1L698.3 132.1L693.9 132.3Z"/><path color="#696d7c" d="M725.9 394.7L726.3 392.8L734.3 416.3L734.3 418.3Z"/><path color="#696d7c" d="M697.5 296.2L698.5 294.8L705 317.8L704.5 319.4Z"/><path color="#696d7c" d="M742.6 444L742.7 441.9L751.1 465.6L751.3 467.8Z"/><path color="#696d7c" d="M699.1 111.1L704.3 111.1L702.7 131.9L698.3 132.1Z"/><path color="#696d7c" d="M718.3 369.3L718.7 367.5L726.2 390.8L726.3 392.8Z"/><path color="#696d7c" d="M711.2 344.2L711.5 342.5L718.6 365.6L718.7 367.5Z"/><path color="#696d7c" d="M734.3 418.3L734.3 416.3L742.3 439.7L742.7 441.9Z"/><path color="#696d7c" d="M751.3 467.8L751.1 465.6L759.5 489.2L760.1 491.6Z"/><path color="#696d7c" d="M704.5 319.4L705 317.8L711.5 340.7L711.5 342.5Z"/><path color="#696d7c" d="M704.3 111.1L709.6 111.1L707 131.7L702.7 131.9Z"/><path color="#696d7c" d="M698.5 294.8L699.2 293.4L705.2 316.1L705 317.8Z"/><path color="#696d7c" d="M726.3 392.8L726.2 390.8L733.8 414.1L734.3 416.3Z"/><path color="#696d7c" d="M742.7 441.9L742.3 439.7L750.3 463.2L751.1 465.6Z"/><path color="#696d7c" d="M718.7 367.5L718.6 365.6L725.6 388.8L726.2 390.8Z"/><path color="#696d7c" d="M709.6 111.1L714.9 111L711.3 131.5L707 131.7Z"/><path color="#696d7c" d="M711.5 342.5L711.5 340.7L718.1 363.7L718.6 365.6Z"/><path color="#696d7c" d="M705 317.8L705.2 316.1L711.1 338.9L711.5 340.7Z"/><path color="#747889" d="M734.3 416.3L733.8 414.1L741.3 437.4L742.3 439.7Z"/><path color="#696d7c" d="M694.3 269.3L695.1 267.9L699.8 290.3L699.7 291.9Z"/><path color="#696d7c" d="M699.2 293.4L699.7 291.9L705 314.5L705.2 316.1Z"/><path color="#747889" d="M751.1 465.6L750.3 463.2L758.3 486.7L759.5 489.2Z"/><path color="#696d7c" d="M714.9 111L720.1 111L715.6 131.3L711.3 131.5Z"/><path color="#747889" d="M726.2 390.8L725.6 388.8L732.7 411.9L733.8 414.1Z"/><path color="#747889" d="M718.6 365.6L718.1 363.7L724.6 386.7L725.6 388.8Z"/><path color="#696d7c" d="M691.6 244.4L692.6 243.2L695.9 265.2L695.6 266.6Z"/><path color="#747889" d="M742.3 439.7L741.3 437.4L748.8 460.8L750.3 463.2Z"/><path color="#747889" d="M711.5 340.7L711.1 338.9L717.1 361.7L718.1 363.7Z"/><path color="#696d7c" d="M720.1 111L725.4 111L719.9 131.1L715.6 131.3Z"/><path color="#696d7c" d="M695.1 267.9L695.6 266.6L699.6 288.8L699.8 290.3Z"/><path color="#747888" d="M705.2 316.1L705 314.5L710.4 337.1L711.1 338.9Z"/><path color="#696d7c" d="M699.7 291.9L699.8 290.3L704.5 312.8L705 314.5Z"/><path color="#757989" d="M733.8 414.1L732.7 411.9L739.7 435.1L741.3 437.4Z"/><path color="#696d7c" d="M725.4 111L730.7 111L724.2 130.9L719.9 131.1Z"/><path color="#75798a" d="M725.6 388.8L724.6 386.7L731.1 409.6L732.7 411.9Z"/><path color="#75798a" d="M750.3 463.2L748.8 460.8L756.4 484.1L758.3 486.7Z"/><path color="#696d7c" d="M692.6 243.2L693.3 242L695.9 263.8L695.9 265.2Z"/><path color="#696d7c" d="M695.6 266.6L695.9 265.2L699.2 287.2L699.6 288.8Z"/><path color="#75798a" d="M718.1 363.7L717.1 361.7L723 384.5L724.6 386.7Z"/><path color="#747889" d="M699.8 290.3L699.6 288.8L703.6 311L704.5 312.8Z"/><path color="#75798a" d="M711.1 338.9L710.4 337.1L715.7 359.7L717.1 361.7Z"/><path color="#747889" d="M705 314.5L704.5 312.8L709.2 335.2L710.4 337.1Z"/><path color="#767a8b" d="M741.3 437.4L739.7 435.1L746.8 458.2L748.8 460.8Z"/><path color="#696d7c" d="M730.7 111L736 111L728.4 130.7L724.2 130.9Z"/><path color="#696d7c" d="M693.3 242L693.9 240.8L695.7 262.4L695.9 263.8Z"/><path color="#767a8b" d="M732.7 411.9L731.1 409.6L737.6 432.6L739.7 435.1Z"/><path color="#747888" d="M695.9 265.2L695.9 263.8L698.4 285.6L699.2 287.2Z"/><path color="#767a8b" d="M724.6 386.7L723 384.5L729 407.3L731.1 409.6Z"/><path color="#696d7c" d="M736 111L741.2 111L732.7 130.5L728.4 130.7Z"/><path color="#747889" d="M699.6 288.8L699.2 287.2L702.5 309.2L703.6 311Z"/><path color="#777b8c" d="M748.8 460.8L746.8 458.2L753.8 481.3L756.4 484.1Z"/><path color="#767a8b" d="M717.1 361.7L715.7 359.7L721 382.3L723 384.5Z"/><path color="#75798a" d="M704.5 312.8L703.6 311L707.7 333.2L709.2 335.2Z"/><path color="#767a8b" d="M710.4 337.1L709.2 335.2L713.9 357.6L715.7 359.7Z"/><path color="#696d7c" d="M693.9 240.8L694.3 239.6L695.2 261L695.7 262.4Z"/><path color="#787c8d" d="M739.7 435.1L737.6 432.6L744.1 455.6L746.8 458.2Z"/><path color="#696d7c" d="M741.2 111L746.5 111L736.9 130.3L732.7 130.5Z"/><path color="#747889" d="M695.9 263.8L695.7 262.4L697.4 284L698.4 285.6Z"/><path color="#696d7c" d="M694.4 217.2L695.3 216.1L694.5 237.2L694.5 238.4Z"/><path color="#787c8e" d="M731.1 409.6L729 407.3L734.9 430L737.6 432.6Z"/><path color="#75798a" d="M699.2 287.2L698.4 285.6L701 307.5L702.5 309.2Z"/><path color="#696d7c" d="M697.7 194.3L699.3 193.5L696.7 214.1L696.1 215.1Z"/><path color="#797d8e" d="M723 384.5L721 382.3L726.4 404.8L729 407.3Z"/><path color="#777b8c" d="M703.6 311L702.5 309.2L705.8 331.3L707.7 333.2Z"/><path color="#737788" d="M694.3 239.6L694.5 238.4L694.6 259.6L695.2 261Z"/><path color="#797d8e" d="M715.7 359.7L713.9 357.6L718.6 380L721 382.3Z"/><path color="#787c8d" d="M709.2 335.2L707.7 333.2L711.7 355.4L713.9 357.6Z"/><path color="#696d7c" d="M746.5 111L751.8 111L741.1 130.2L736.9 130.3Z"/><path color="#7a7e8f" d="M746.8 458.2L744.1 455.6L750.6 478.5L753.8 481.3Z"/><path color="#696d7c" d="M695.3 216.1L696.1 215.1L694.4 236L694.5 237.2Z"/><path color="#747889" d="M695.7 262.4L695.2 261L696.2 282.4L697.4 284Z"/><path color="#696d7c" d="M699.3 193.5L700.8 192.7L697.2 213.2L696.7 214.1Z"/><path color="#7b7f91" d="M737.6 432.6L734.9 430L740.9 452.8L744.1 455.6Z"/><path color="#696d7c" d="M732.7 130.5L736.9 130.3L727.3 149.7L724.1 150Z"/><path color="#767b8c" d="M698.4 285.6L697.4 284L699.2 305.7L701 307.5Z"/><path color="#696d7c" d="M751.8 111L757 111L745.3 130L741.1 130.2Z"/><path color="#747888" d="M694.5 238.4L694.5 237.2L693.8 258.2L694.6 259.6Z"/><path color="#7c8092" d="M729 407.3L726.4 404.8L731.7 427.4L734.9 430Z"/><path color="#797d8e" d="M702.5 309.2L701 307.5L703.6 329.3L705.8 331.3Z"/><path color="#696d7c" d="M696.1 215.1L696.7 214.1L694.1 234.8L694.4 236Z"/><path color="#7c8092" d="M721 382.3L718.6 380L723.3 402.4L726.4 404.8Z"/><path color="#7b7f90" d="M707.7 333.2L705.8 331.3L709.1 353.3L711.7 355.4Z"/><path color="#7c8092" d="M713.9 357.6L711.7 355.4L715.7 377.6L718.6 380Z"/><path color="#696d7c" d="M700.8 192.7L702.2 192L697.7 212.2L697.2 213.2Z"/><path color="#75798a" d="M695.2 261L694.6 259.6L694.7 280.8L696.2 282.4Z"/><path color="#696d7c" d="M736.9 130.3L741.1 130.2L730.5 149.3L727.3 149.7Z"/><path color="#696d7c" d="M757 111L762.3 111L749.6 129.9L745.3 130Z"/><path color="#747888" d="M694.5 237.2L694.4 236L692.7 256.8L693.8 258.2Z"/><path color="#787c8d" d="M697.4 284L696.2 282.4L697.2 303.8L699.2 305.7Z"/><path color="#7d8294" d="M744.1 455.6L740.9 452.8L746.8 475.6L750.6 478.5Z"/><path color="#737788" d="M696.7 214.1L697.2 213.2L693.7 233.6L694.1 234.8Z"/><path color="#696d7c" d="M702.2 192L703.5 191.2L698 211.2L697.7 212.2Z"/><path color="#7b7f91" d="M701 307.5L699.2 305.7L701 327.3L703.6 329.3Z"/><path color="#7f8395" d="M734.9 430L731.7 427.4L737.1 450L740.9 452.8Z"/><path color="#696d7c" d="M741.1 130.2L745.3 130L733.7 149L730.5 149.3Z"/><path color="#767a8b" d="M694.6 259.6L693.8 258.2L693 279.2L694.7 280.8Z"/><path color="#7e8294" d="M705.8 331.3L703.6 329.3L706.1 351.1L709.1 353.3Z"/><path color="#808496" d="M726.4 404.8L723.3 402.4L728 424.8L731.7 427.4Z"/><path color="#696d7c" d="M762.3 111L767.6 111L753.8 129.7L749.6 129.9Z"/><path color="#7f8496" d="M711.7 355.4L709.1 353.3L712.4 375.3L715.7 377.6Z"/><path color="#808497" d="M718.6 380L715.7 377.6L719.7 399.9L723.3 402.4Z"/><path color="#747888" d="M694.4 236L694.1 234.8L691.5 255.4L692.7 256.8Z"/><path color="#737788" d="M697.2 213.2L697.7 212.2L693.2 232.4L693.7 233.6Z"/><path color="#7a7e8f" d="M696.2 282.4L694.7 280.8L694.8 302L697.2 303.8Z"/><path color="#696d7c" d="M703.5 191.2L704.7 190.5L698.2 210.3L698 211.2Z"/><path color="#696d7c" d="M745.3 130L749.6 129.9L736.8 148.7L733.7 149Z"/><path color="#7e8295" d="M699.2 305.7L697.2 303.8L698.1 325.3L701 327.3Z"/><path color="#777b8c" d="M693.8 258.2L692.7 256.8L691.1 277.6L693 279.2Z"/><path color="#828699" d="M740.9 452.8L737.1 450L742.4 472.6L746.8 475.6Z"/><path color="#747888" d="M694.1 234.8L693.7 233.6L690.2 254L691.5 255.4Z"/><path color="#818699" d="M703.6 329.3L701 327.3L702.8 348.9L706.1 351.1Z"/><path color="#696d7c" d="M730.5 149.3L733.7 149L722 168L719.9 168.5Z"/><path color="#696d7c" d="M704.7 190.5L705.9 189.7L698.4 209.4L698.2 210.3Z"/><path color="#737788" d="M697.7 212.2L698 211.2L692.5 231.3L693.2 232.4Z"/><path color="#83889b" d="M731.7 427.4L728 424.8L732.7 447.2L737.1 450Z"/><path color="#696d7c" d="M749.6 129.9L753.8 129.7L740 148.4L736.8 148.7Z"/><path color="#83889b" d="M709.1 353.3L706.1 351.1L708.7 372.9L712.4 375.3Z"/><path color="#7c8092" d="M694.7 280.8L693 279.2L692.3 300.2L694.8 302Z"/><path color="#84899c" d="M723.3 402.4L719.7 399.9L723.7 422.1L728 424.8Z"/><path color="#84899c" d="M715.7 377.6L712.4 375.3L715.7 397.3L719.7 399.9Z"/><path color="#777b8c" d="M692.7 256.8L691.5 255.4L689 276L691.1 277.6Z"/><path color="#696d7c" d="M733.7 149L736.8 148.7L724.1 167.6L722 168Z"/><path color="#818598" d="M697.2 303.8L694.8 302L695 323.2L698.1 325.3Z"/><path color="#696d7c" d="M705.9 189.7L707.1 189L698.5 208.5L698.4 209.4Z"/><path color="#747889" d="M693.7 233.6L693.2 232.4L688.7 252.7L690.2 254Z"/><path color="#737788" d="M698 211.2L698.2 210.3L691.8 230.2L692.5 231.3Z"/><path color="#85899c" d="M701 327.3L698.1 325.3L699.1 346.7L702.8 348.9Z"/><path color="#7d8294" d="M693 279.2L691.1 277.6L689.4 298.4L692.3 300.2Z"/><path color="#878b9f" d="M737.1 450L732.7 447.2L737.4 469.6L742.4 472.6Z"/><path color="#696d7c" d="M719.9 168.5L722 168L710.3 187L709.2 187.7Z"/><path color="#696d7c" d="M736.8 148.7L740 148.4L726.1 167.1L724.1 167.6Z"/><path color="#878c9f" d="M706.1 351.1L702.8 348.9L704.5 370.5L708.7 372.9Z"/><path color="#696d7c" d="M707.1 189L708.2 188.3L698.6 207.7L698.5 208.5Z"/><path color="#787c8d" d="M691.5 255.4L690.2 254L686.7 274.4L689 276Z"/><path color="#737788" d="M698.2 210.3L698.4 209.4L690.9 229.1L691.8 230.2Z"/><path color="#747889" d="M693.2 232.4L692.5 231.3L687 251.3L688.7 252.7Z"/><path color="#888da0" d="M728 424.8L723.7 422.1L727.8 444.3L732.7 447.2Z"/><path color="#888da1" d="M712.4 375.3L708.7 372.9L711.2 394.7L715.7 397.3Z"/><path color="#888da1" d="M719.7 399.9L715.7 397.3L719 419.3L723.7 422.1Z"/><path color="#83889a" d="M694.8 302L692.3 300.2L691.5 321.2L695 323.2Z"/><path color="#696d7c" d="M722 168L724.1 167.6L711.3 186.4L710.3 187Z"/><path color="#696d7c" d="M708.2 188.3L709.2 187.7L698.6 206.8L698.6 207.7Z"/><path color="#7e8395" d="M691.1 277.6L689 276L686.4 296.6L689.4 298.4Z"/><path color="#878c9f" d="M698.1 325.3L695 323.2L695.1 344.5L699.1 346.7Z"/><path color="#737788" d="M698.4 209.4L698.5 208.5L690 228L690.9 229.1Z"/><path color="#787c8d" d="M690.2 254L688.7 252.7L684.2 272.9L686.7 274.4Z"/><path color="#747888" d="M692.5 231.3L691.8 230.2L685.3 250L687 251.3Z"/><path color="#8a8ea2" d="M702.8 348.9L699.1 346.7L700 368.1L704.5 370.5Z"/><path color="#696d7c" d="M724.1 167.6L726.1 167.1L712.3 185.9L711.3 186.4Z"/><path color="#84899c" d="M692.3 300.2L689.4 298.4L687.8 319.2L691.5 321.2Z"/><path color="#696d7c" d="M709.2 187.7L710.3 187L698.6 206L698.6 206.8Z"/><path color="#8b90a4" d="M708.7 372.9L704.5 370.5L706.3 392.1L711.2 394.7Z"/><path color="#8b8fa3" d="M732.7 447.2L727.8 444.3L731.8 466.5L737.4 469.6Z"/><path color="#737788" d="M698.5 208.5L698.6 207.7L689 227L690 228Z"/><path color="#8b90a4" d="M715.7 397.3L711.2 394.7L713.8 416.5L719 419.3Z"/><path color="#8b90a4" d="M723.7 422.1L719 419.3L722.3 441.3L727.8 444.3Z"/><path color="#7e8395" d="M689 276L686.7 274.4L683.1 294.9L686.4 296.6Z"/><path color="#747888" d="M691.8 230.2L690.9 229.1L683.4 248.7L685.3 250Z"/><path color="#787c8d" d="M688.7 252.7L687 251.3L681.5 271.4L684.2 272.9Z"/><path color="#888da0" d="M695 323.2L691.5 321.2L690.7 342.2L695.1 344.5Z"/><path color="#696d7c" d="M710.3 187L711.3 186.4L698.6 205.3L698.6 206Z"/><path color="#737788" d="M698.6 207.7L698.6 206.8L688 226L689 227Z"/><path color="#84889b" d="M689.4 298.4L686.4 296.6L683.8 317.2L687.8 319.2Z"/><path color="#8a8fa3" d="M699.1 346.7L695.1 344.5L695.2 365.7L700 368.1Z"/><path color="#747888" d="M690.9 229.1L690 228L681.4 247.5L683.4 248.7Z"/><path color="#777b8c" d="M687 251.3L685.3 250L678.8 269.9L681.5 271.4Z"/><path color="#7e8294" d="M686.7 274.4L684.2 272.9L679.7 293.1L683.1 294.9Z"/><path color="#696d7c" d="M711.3 186.4L712.3 185.9L698.5 204.6L698.6 205.3Z"/><path color="#8b90a4" d="M704.5 370.5L700 368.1L701 389.5L706.3 392.1Z"/><path color="#737788" d="M698.6 206.8L698.6 206L686.9 225L688 226Z"/><path color="#878c9f" d="M691.5 321.2L687.8 319.2L686.1 340L690.7 342.2Z"/><path color="#8c91a5" d="M711.2 394.7L706.3 392.1L708.1 413.7L713.8 416.5Z"/><path color="#8d92a6" d="M727.8 444.3L722.3 441.3L725.6 463.4L731.8 466.5Z"/><path color="#737788" d="M690 228L689 227L679.4 246.3L681.4 247.5Z"/><path color="#8d91a6" d="M719 419.3L713.8 416.5L716.3 438.4L722.3 441.3Z"/><path color="#767b8c" d="M685.3 250L683.4 248.7L675.9 268.4L678.8 269.9Z"/><path color="#828699" d="M686.4 296.6L683.1 294.9L679.6 315.3L683.8 317.2Z"/><path color="#7c8092" d="M684.2 272.9L681.5 271.4L676.1 291.4L679.7 293.1Z"/><path color="#737788" d="M698.6 206L698.6 205.3L685.8 224.1L686.9 225Z"/><path color="#898da1" d="M695.1 344.5L690.7 342.2L690 363.3L695.2 365.7Z"/><path color="#737788" d="M689 227L688 226L677.3 245.2L679.4 246.3Z"/><path color="#8a8ea2" d="M700 368.1L695.2 365.7L695.3 386.9L701 389.5Z"/><path color="#84899c" d="M687.8 319.2L683.8 317.2L681.2 337.9L686.1 340Z"/><path color="#767a8b" d="M683.4 248.7L681.4 247.5L672.9 267L675.9 268.4Z"/><path color="#737788" d="M698.6 205.3L698.5 204.6L684.7 223.3L685.8 224.1Z"/><path color="#7a7e90" d="M681.5 271.4L678.8 269.9L672.3 289.7L676.1 291.4Z"/><path color="#7f8496" d="M683.1 294.9L679.7 293.1L675.2 313.3L679.6 315.3Z"/><path color="#8b8fa3" d="M706.3 392.1L701 389.5L702 410.9L708.1 413.7Z"/><path color="#737788" d="M688 226L686.9 225L675.2 244.1L677.3 245.2Z"/><path color="#8c90a4" d="M713.8 416.5L708.1 413.7L709.9 435.4L716.3 438.4Z"/><path color="#8c91a5" d="M722.3 441.3L716.3 438.4L718.9 460.2L725.6 463.4Z"/><path color="#858a9d" d="M690.7 342.2L686.1 340L684.5 360.9L690 363.3Z"/><path color="#75798a" d="M681.4 247.5L679.4 246.3L669.8 265.6L672.9 267Z"/><path color="#737788" d="M686.9 225L685.8 224.1L673.1 243L675.2 244.1Z"/><path color="#787c8e" d="M678.8 269.9L675.9 268.4L668.4 288.1L672.3 289.7Z"/><path color="#808597" d="M683.8 317.2L679.6 315.3L676.1 335.7L681.2 337.9Z"/><path color="#7c8092" d="M679.7 293.1L676.1 291.4L670.6 311.4L675.2 313.3Z"/><path color="#868b9e" d="M695.2 365.7L690 363.3L689.2 384.3L695.3 386.9Z"/><path color="#747889" d="M679.4 246.3L677.3 245.2L666.7 264.3L669.8 265.6Z"/><path color="#737788" d="M685.8 224.1L684.7 223.3L670.9 242L673.1 243Z"/><path color="#878c9f" d="M701 389.5L695.3 386.9L695.4 408.1L702 410.9Z"/><path color="#767b8c" d="M675.9 268.4L672.9 267L664.4 286.5L668.4 288.1Z"/><path color="#818598" d="M686.1 340L681.2 337.9L678.6 358.5L684.5 360.9Z"/><path color="#797d8f" d="M676.1 291.4L672.3 289.7L665.8 309.6L670.6 311.4Z"/><path color="#747888" d="M677.3 245.2L675.2 244.1L663.5 263.1L666.7 264.3Z"/><path color="#7c8193" d="M679.6 315.3L675.2 313.3L670.7 333.6L676.1 335.7Z"/><path color="#888da1" d="M708.1 413.7L702 410.9L702.9 432.4L709.9 435.4Z"/><path color="#8a8ea2" d="M716.3 438.4L709.9 435.4L711.6 457L718.9 460.2Z"/><path color="#75798a" d="M672.9 267L669.8 265.6L660.3 285L664.4 286.5Z"/><path color="#818699" d="M690 363.3L684.5 360.9L682.8 381.7L689.2 384.3Z"/><path color="#737788" d="M675.2 244.1L673.1 243L660.3 261.9L663.5 263.1Z"/><path color="#767a8b" d="M672.3 289.7L668.4 288.1L660.9 307.8L665.8 309.6Z"/><path color="#7d8193" d="M681.2 337.9L676.1 335.7L672.5 356.1L678.6 358.5Z"/><path color="#797d8f" d="M675.2 313.3L670.6 311.4L665.1 331.5L670.7 333.6Z"/><path color="#82879a" d="M695.3 386.9L689.2 384.3L688.5 405.3L695.4 408.1Z"/><path color="#737787" d="M669.8 265.6L666.7 264.3L656.1 283.5L660.3 285Z"/><path color="#727686" d="M673.1 243L670.9 242L657.1 260.7L660.3 261.9Z"/><path color="#84889b" d="M702 410.9L695.4 408.1L695.5 429.3L702.9 432.4Z"/><path color="#737788" d="M668.4 288.1L664.4 286.5L655.8 306L660.9 307.8Z"/><path color="#7d8193" d="M684.5 360.9L678.6 358.5L676.1 379.1L682.8 381.7Z"/><path color="#717585" d="M666.7 264.3L663.5 263.1L651.8 282.1L656.1 283.5Z"/><path color="#858a9d" d="M709.9 435.4L702.9 432.4L703.9 453.8L711.6 457Z"/><path color="#75798a" d="M670.6 311.4L665.8 309.6L659.3 329.4L665.1 331.5Z"/><path color="#787c8e" d="M676.1 335.7L670.7 333.6L666.2 353.8L672.5 356.1Z"/><path color="#6f7383" d="M663.5 263.1L660.3 261.9L647.6 280.7L651.8 282.1Z"/><path color="#717585" d="M664.4 286.5L660.3 285L650.7 304.3L655.8 306Z"/><path color="#7e8294" d="M689.2 384.3L682.8 381.7L681.1 402.5L688.5 405.3Z"/><path color="#727686" d="M665.8 309.6L660.9 307.8L653.4 327.4L659.3 329.4Z"/><path color="#6d7180" d="M660.3 261.9L657.1 260.7L643.3 279.4L647.6 280.7Z"/><path color="#787c8e" d="M678.6 358.5L672.5 356.1L669 376.5L676.1 379.1Z"/><path color="#6f7382" d="M660.3 285L656.1 283.5L645.4 302.6L650.7 304.3Z"/><path color="#747889" d="M670.7 333.6L665.1 331.5L659.6 351.5L666.2 353.8Z"/><path color="#7f8395" d="M695.4 408.1L688.5 405.3L687.7 426.3L695.5 429.3Z"/><path color="#808597" d="M702.9 432.4L695.5 429.3L695.6 450.5L703.9 453.8Z"/><path color="#6f7383" d="M660.9 307.8L655.8 306L647.3 325.5L653.4 327.4Z"/><path color="#6d7080" d="M656.1 283.5L651.8 282.1L640.1 301.1L645.4 302.6Z"/><path color="#797d8e" d="M682.8 381.7L676.1 379.1L673.5 399.7L681.1 402.5Z"/><path color="#717585" d="M665.1 331.5L659.3 329.4L652.8 349.3L659.6 351.5Z"/><path color="#747889" d="M672.5 356.1L666.2 353.8L661.7 374L669 376.5Z"/><path color="#6b6f7e" d="M651.8 282.1L647.6 280.7L634.8 299.6L640.1 301.1Z"/><path color="#6d7181" d="M655.8 306L650.7 304.3L641.1 323.6L647.3 325.5Z"/><path color="#7a7e8f" d="M688.5 405.3L681.1 402.5L679.5 423.3L687.7 426.3Z"/><path color="#6b6e7e" d="M647.6 280.7L643.3 279.4L629.5 298.1L634.8 299.6Z"/><path color="#6f7382" d="M659.3 329.4L653.4 327.4L645.9 347.1L652.8 349.3Z"/><path color="#6b6f7f" d="M650.7 304.3L645.4 302.6L634.8 321.8L641.1 323.6Z"/><path color="#747889" d="M676.1 379.1L669 376.5L665.5 397L673.5 399.7Z"/><path color="#717585" d="M666.2 353.8L659.6 351.5L654.1 371.6L661.7 374Z"/><path color="#7b7f91" d="M695.5 429.3L687.7 426.3L687 447.3L695.6 450.5Z"/><path color="#6b6f7e" d="M645.4 302.6L640.1 301.1L628.5 320.1L634.8 321.8Z"/><path color="#6d7080" d="M653.4 327.4L647.3 325.5L638.8 345L645.9 347.1Z"/><path color="#75798a" d="M681.1 402.5L673.5 399.7L670.9 420.3L679.5 423.3Z"/><path color="#6b6e7e" d="M640.1 301.1L634.8 299.6L622.1 318.4L628.5 320.1Z"/><path color="#6e7282" d="M659.6 351.5L652.8 349.3L646.3 369.1L654.1 371.6Z"/><path color="#717585" d="M669 376.5L661.7 374L657.2 394.3L665.5 397Z"/><path color="#6b6f7e" d="M647.3 325.5L641.1 323.6L631.5 342.9L638.8 345Z"/><path color="#6a6e7d" d="M634.8 299.6L629.5 298.1L615.6 316.9L622.1 318.4Z"/><path color="#767a8b" d="M687.7 426.3L679.5 423.3L677.8 444.1L687 447.3Z"/><path color="#6b6e7e" d="M641.1 323.6L634.8 321.8L624.2 341L631.5 342.9Z"/><path color="#6c7080" d="M652.8 349.3L645.9 347.1L638.4 366.8L646.3 369.1Z"/><path color="#727686" d="M673.5 399.7L665.5 397L662 417.4L670.9 420.3Z"/><path color="#6f7282" d="M661.7 374L654.1 371.6L648.6 391.6L657.2 394.3Z"/><path color="#6b6e7e" d="M634.8 321.8L628.5 320.1L616.8 339.1L624.2 341Z"/><path color="#6b6f7e" d="M645.9 347.1L638.8 345L630.2 364.5L638.4 366.8Z"/><path color="#6a6e7d" d="M628.5 320.1L622.1 318.4L609.3 337.3L616.8 339.1Z"/><path color="#737787" d="M679.5 423.3L670.9 420.3L668.3 441L677.8 444.1Z"/><path color="#6a6e7d" d="M622.1 318.4L615.6 316.9L601.8 335.6L609.3 337.3Z"/><path color="#6d7080" d="M654.1 371.6L646.3 369.1L639.9 389L648.6 391.6Z"/><path color="#6f7383" d="M665.5 397L657.2 394.3L652.7 414.5L662 417.4Z"/><path color="#6b6e7e" d="M638.8 345L631.5 342.9L621.9 362.3L630.2 364.5Z"/><path color="#6b6e7d" d="M631.5 342.9L624.2 341L613.5 360.1L621.9 362.3Z"/><path color="#6b6f7e" d="M646.3 369.1L638.4 366.8L630.9 386.5L639.9 389Z"/><path color="#707484" d="M670.9 420.3L662 417.4L658.4 437.8L668.3 441Z"/><path color="#6a6e7d" d="M624.2 341L616.8 339.1L605.1 358.1L613.5 360.1Z"/><path color="#6d7180" d="M657.2 394.3L648.6 391.6L643.2 411.6L652.7 414.5Z"/><path color="#6a6e7d" d="M616.8 339.1L609.3 337.3L596.6 356.1L605.1 358.1Z"/><path color="#6b6e7e" d="M638.4 366.8L630.2 364.5L621.7 384L630.9 386.5Z"/><path color="#6a6d7d" d="M609.3 337.3L601.8 335.6L588 354.3L596.6 356.1Z"/><path color="#6b6f7e" d="M648.6 391.6L639.9 389L633.4 408.8L643.2 411.6Z"/><path color="#6b6e7e" d="M630.2 364.5L621.9 362.3L612.3 381.6L621.7 384Z"/><path color="#6d7181" d="M662 417.4L652.7 414.5L648.2 434.7L658.4 437.8Z"/><path color="#6a6e7d" d="M621.9 362.3L613.5 360.1L602.9 379.3L612.3 381.6Z"/><path color="#6b6f7e" d="M639.9 389L630.9 386.5L623.3 406.1L633.4 408.8Z"/><path color="#6a6e7d" d="M613.5 360.1L605.1 358.1L593.4 377.1L602.9 379.3Z"/><path color="#6b6f7f" d="M652.7 414.5L643.2 411.6L637.7 431.7L648.2 434.7Z"/><path color="#6a6d7d" d="M605.1 358.1L596.6 356.1L583.8 375L593.4 377.1Z"/><path color="#6a6d7c" d="M596.6 356.1L588 354.3L574.2 373L583.8 375Z"/><path color="#6b6e7e" d="M630.9 386.5L621.7 384L613.1 403.5L623.3 406.1Z"/><path color="#6a6e7d" d="M621.7 384L612.3 381.6L602.8 400.9L613.1 403.5Z"/><path color="#6b6f7e" d="M643.2 411.6L633.4 408.8L626.9 428.7L637.7 431.7Z"/><path color="#6a6e7d" d="M612.3 381.6L602.9 379.3L592.3 398.5L602.8 400.9Z"/><path color="#6a6e7d" d="M602.9 379.3L593.4 377.1L581.7 396.1L592.3 398.5Z"/><path color="#6b6e7e" d="M633.4 408.8L623.3 406.1L615.8 425.8L626.9 428.7Z"/><path color="#6a6d7c" d="M593.4 377.1L583.8 375L571.1 393.9L581.7 396.1Z"/><path color="#696d7c" d="M583.8 375L574.2 373L560.4 391.7L571.1 393.9Z"/><path color="#6a6e7d" d="M623.3 406.1L613.1 403.5L604.6 423L615.8 425.8Z"/><path color="#6a6e7d" d="M613.1 403.5L602.8 400.9L593.2 420.3L604.6 423Z"/><path color="#6a6e7d" d="M602.8 400.9L592.3 398.5L581.6 417.6L593.2 420.3Z"/><path color="#6a6d7d" d="M592.3 398.5L581.7 396.1L570 415.1L581.6 417.6Z"/><path color="#696d7c" d="M581.7 396.1L571.1 393.9L558.3 412.7L570 415.1Z"/><path color="#696d7c" d="M571.1 393.9L560.4 391.7L546.6 410.4L558.3 412.7Z"/></g></g>
<g clip-path="url(#c1)"><g filter="url(#sm)" fill="currentColor" stroke="currentColor" stroke-width="0.8" stroke-linejoin="round"><path color="#696c7b" d="M472.5 111.3L477.7 111.3L478.7 117L473.7 117Z"/><path color="#696c7b" d="M473.7 117L478.7 117L479.7 122.7L475 122.8Z"/><path color="#686c7b" d="M475 122.8L479.7 122.7L481 130.3L476.6 130.4Z"/><path color="#686c7b" d="M476.6 130.4L481 130.3L482.7 139.8L478.7 140Z"/><path color="#686b7a" d="M478.7 140L482.7 139.8L484.4 149.3L480.8 149.5Z"/><path color="#676a79" d="M480.8 149.5L484.4 149.3L488.3 172.1L485.8 172.5Z"/><path color="#656877" d="M485.8 172.5L488.3 172.1L492.3 194.9L490.8 195.4Z"/><path color="#626573" d="M490.8 195.4L492.3 194.9L496.3 217.8L495.8 218.4Z"/><path color="#6a6d7c" d="M477.7 111.3L483 111.3L483.7 116.9L478.7 117Z"/><path color="#696d7c" d="M478.7 117L483.7 116.9L484.5 122.6L479.7 122.7Z"/><path color="#5d606e" d="M495.8 218.4L496.3 217.8L500.3 240.6L500.8 241.4Z"/><path color="#696d7c" d="M479.7 122.7L484.5 122.6L485.5 130.2L481 130.3Z"/><path color="#696d7c" d="M481 130.3L485.5 130.2L486.7 139.6L482.7 139.8Z"/><path color="#686c7b" d="M482.7 139.8L486.7 139.6L487.9 149.1L484.4 149.3Z"/><path color="#686b7a" d="M484.4 149.3L487.9 149.1L490.9 171.7L488.3 172.1Z"/><path color="#666978" d="M488.3 172.1L490.9 171.7L493.9 194.4L492.3 194.9Z"/><path color="#636675" d="M492.3 194.9L493.9 194.4L496.8 217.1L496.3 217.8Z"/><path color="#5f6270" d="M496.3 217.8L496.8 217.1L499.8 239.8L500.3 240.6Z"/><path color="#6a6e7d" d="M483 111.3L488.3 111.3L488.8 116.9L483.7 116.9Z"/><path color="#6a6e7d" d="M483.7 116.9L488.8 116.9L489.2 122.5L484.5 122.6Z"/><path color="#6a6e7d" d="M484.5 122.6L489.2 122.5L489.9 130L485.5 130.2Z"/><path color="#6a6d7d" d="M485.5 130.2L489.9 130L490.7 139.4L486.7 139.6Z"/><path color="#696d7c" d="M486.7 139.6L490.7 139.4L491.5 148.8L487.9 149.1Z"/><path color="#696c7b" d="M487.9 149.1L491.5 148.8L493.5 171.3L490.9 171.7Z"/><path color="#676b79" d="M490.9 171.7L493.5 171.3L495.4 193.8L493.9 194.4Z"/><path color="#646876" d="M493.9 194.4L495.4 193.8L497.4 216.4L496.8 217.1Z"/><path color="#606471" d="M496.8 217.1L497.4 216.4L499.3 238.9L499.8 239.8Z"/><path color="#6a6e7d" d="M535.8 402L528.2 400.3L532.1 423.1L540.8 425Z"/><path color="#696c7b" d="M528.2 400.3L520.5 398.5L523.5 421.2L532.1 423.1Z"/><path color="#6b6f7e" d="M488.3 111.3L493.5 111.3L493.8 116.8L488.8 116.9Z"/><path color="#6b6f7e" d="M488.8 116.9L493.8 116.8L494 122.4L489.2 122.5Z"/><path color="#6b6f7e" d="M489.2 122.5L494 122.4L494.3 129.9L489.9 130Z"/><path color="#6b6e7e" d="M489.9 130L494.3 129.9L494.7 139.2L490.7 139.4Z"/><path color="#6a6e7d" d="M490.7 139.4L494.7 139.2L495.1 148.5L491.5 148.8Z"/><path color="#6a6d7d" d="M491.5 148.8L495.1 148.5L496 170.9L493.5 171.3Z"/><path color="#686c7b" d="M493.5 171.3L496 170.9L497 193.3L495.4 193.8Z"/><path color="#666978" d="M495.4 193.8L497 193.3L497.9 215.6L497.4 216.4Z"/><path color="#626573" d="M497.4 216.4L497.9 215.6L498.9 238L499.3 238.9Z"/><path color="#676b7a" d="M520.5 398.5L513 396.6L514.9 419.1L523.5 421.2Z"/><path color="#6b6f7e" d="M550.8 470.9L540.1 468.8L544.1 491.6L555.8 493.9Z"/><path color="#6a6e7d" d="M540.1 468.8L529.4 466.5L532.4 489.2L544.1 491.6Z"/><path color="#696c7b" d="M529.4 466.5L518.8 464.1L520.8 486.7L532.4 489.2Z"/><path color="#666978" d="M513 396.6L505.5 394.6L506.4 416.9L514.9 419.1Z"/><path color="#686b7a" d="M518.8 464.1L508.3 461.7L509.2 484L520.8 486.7Z"/><path color="#6c7080" d="M493.5 111.3L498.8 111.2L498.8 116.8L493.8 116.8Z"/><path color="#6c707f" d="M493.8 116.8L498.8 116.8L498.8 122.4L494 122.4Z"/><path color="#6c707f" d="M494 122.4L498.8 122.4L498.8 129.8L494.3 129.9Z"/><path color="#6c707f" d="M494.3 129.9L498.8 129.8L498.7 139L494.7 139.2Z"/><path color="#6c6f7f" d="M494.7 139.2L498.7 139L498.7 148.3L495.1 148.5Z"/><path color="#6b6f7e" d="M495.1 148.5L498.7 148.3L498.6 170.5L496 170.9Z"/><path color="#696d7c" d="M496 170.9L498.6 170.5L498.6 192.7L497 193.3Z"/><path color="#676b79" d="M497 193.3L498.6 192.7L498.5 214.9L497.9 215.6Z"/><path color="#636775" d="M497.9 215.6L498.5 214.9L498.5 237.1L498.9 238Z"/><path color="#646776" d="M505.5 394.6L498 392.5L498 414.7L506.4 416.9Z"/><path color="#666a78" d="M508.3 461.7L497.9 459.1L497.8 481.3L509.2 484Z"/><path color="#656877" d="M497.9 459.1L487.6 456.5L486.6 478.5L497.8 481.3Z"/><path color="#626674" d="M498 392.5L490.8 390.4L489.7 412.4L498 414.7Z"/><path color="#656977" d="M498.5 214.9L499.2 214.1L498.1 236.1L498.5 237.1Z"/><path color="#686c7b" d="M498.6 192.7L500.2 192L499.2 214.1L498.5 214.9Z"/><path color="#6b6e7e" d="M498.6 170.5L501.3 170L500.2 192L498.6 192.7Z"/><path color="#6c707f" d="M498.7 148.3L502.3 148L501.3 170L498.6 170.5Z"/><path color="#6d7080" d="M498.7 139L502.8 138.8L502.3 148L498.7 148.3Z"/><path color="#6d7180" d="M498.8 129.8L503.2 129.6L502.8 138.8L498.7 139Z"/><path color="#6d7180" d="M498.8 122.4L503.6 122.3L503.2 129.6L498.8 129.8Z"/><path color="#6d7181" d="M498.8 116.8L503.8 116.8L503.6 122.3L498.8 122.4Z"/><path color="#6d7181" d="M498.8 111.2L504.1 111.2L503.8 116.8L498.8 116.8Z"/><path color="#636775" d="M487.6 456.5L477.6 453.7L475.5 475.6L486.6 478.5Z"/><path color="#606471" d="M490.8 390.4L483.6 388.2L481.6 410L489.7 412.4Z"/><path color="#676a79" d="M499.2 214.1L499.9 213.3L497.8 235.1L498.1 236.1Z"/><path color="#6a6e7d" d="M500.2 192L501.9 191.4L499.9 213.3L499.2 214.1Z"/><path color="#6c707f" d="M501.3 170L503.9 169.5L501.9 191.4L500.2 192Z"/><path color="#616573" d="M477.6 453.7L467.7 450.9L464.7 472.6L475.5 475.6Z"/><path color="#6d7181" d="M502.3 148L506 147.7L503.9 169.5L501.3 170Z"/><path color="#6e7281" d="M502.8 138.8L506.8 138.6L506 147.7L502.3 148Z"/><path color="#6e7282" d="M503.2 129.6L507.7 129.5L506.8 138.6L502.8 138.8Z"/><path color="#6e7282" d="M503.6 122.3L508.3 122.2L507.7 129.5L503.2 129.6Z"/><path color="#6e7282" d="M503.8 116.8L508.8 116.7L508.3 122.2L503.6 122.3Z"/><path color="#6e7282" d="M504.1 111.2L509.4 111.2L508.8 116.7L503.8 116.8Z"/><path color="#5e616f" d="M483.6 388.2L476.7 385.9L473.7 407.6L481.6 410Z"/><path color="#686c7b" d="M499.9 213.3L500.6 212.4L497.7 234.1L497.8 235.1Z"/><path color="#606371" d="M467.7 450.9L458.1 448.1L454.2 469.6L464.7 472.6Z"/><path color="#6b6f7e" d="M501.9 191.4L503.6 190.7L500.6 212.4L499.9 213.3Z"/><path color="#6d7181" d="M503.9 169.5L506.6 169.1L503.6 190.7L501.9 191.4Z"/><path color="#6e7282" d="M506 147.7L509.6 147.4L506.6 169.1L503.9 169.5Z"/><path color="#6f7383" d="M506.8 138.6L510.9 138.3L509.6 147.4L506 147.7Z"/><path color="#6f7383" d="M507.7 129.5L512.1 129.3L510.9 138.3L506.8 138.6Z"/><path color="#5c5f6d" d="M476.7 385.9L470 383.6L466 405.1L473.7 407.6Z"/><path color="#6f7383" d="M508.3 122.2L513.1 122.1L512.1 129.3L507.7 129.5Z"/><path color="#6f7383" d="M508.8 116.7L513.9 116.7L513.1 122.1L508.3 122.2Z"/><path color="#6f7383" d="M509.4 111.2L514.6 111.2L513.9 116.7L508.8 116.7Z"/><path color="#6a6e7d" d="M500.6 212.4L501.5 211.6L497.6 233.1L497.7 234.1Z"/><path color="#5e616e" d="M458.1 448.1L448.8 445.2L444 466.5L454.2 469.6Z"/><path color="#6d7180" d="M503.6 190.7L505.4 190.1L501.5 211.6L500.6 212.4Z"/><path color="#6f7282" d="M506.6 169.1L509.4 168.6L505.4 190.1L503.6 190.7Z"/><path color="#707484" d="M509.6 147.4L513.3 147.1L509.4 168.6L506.6 169.1Z"/><path color="#5a5d6a" d="M470 383.6L463.5 381.2L458.6 402.5L466 405.1Z"/><path color="#707484" d="M510.9 138.3L515 138.1L513.3 147.1L509.6 147.4Z"/><path color="#707484" d="M512.1 129.3L516.6 129.1L515 138.1L510.9 138.3Z"/><path color="#707484" d="M513.1 122.1L517.9 122L516.6 129.1L512.1 129.3Z"/><path color="#707484" d="M513.9 116.7L518.9 116.6L517.9 122L513.1 122.1Z"/><path color="#717484" d="M514.6 111.2L519.9 111.2L518.9 116.6L513.9 116.7Z"/><path color="#575a66" d="M497.6 233.1L497.6 232L492.7 253.3L493.6 254.6Z"/><path color="#6c6f7f" d="M501.5 211.6L502.4 210.7L497.6 232L497.6 233.1Z"/><path color="#5c5f6c" d="M448.8 445.2L439.9 442.2L434.1 463.3L444 466.5Z"/><path color="#6e7282" d="M505.4 190.1L507.3 189.4L502.4 210.7L501.5 211.6Z"/><path color="#707484" d="M509.4 168.6L512.2 168.1L507.3 189.4L505.4 190.1Z"/><path color="#717585" d="M513.3 147.1L517 146.8L512.2 168.1L509.4 168.6Z"/><path color="#585b67" d="M463.5 381.2L457.2 378.8L451.4 400L458.6 402.5Z"/><path color="#717585" d="M515 138.1L519.1 137.9L517 146.8L513.3 147.1Z"/><path color="#727586" d="M516.6 129.1L521.1 129L519.1 137.9L515 138.1Z"/><path color="#727686" d="M517.9 122L522.7 121.9L521.1 129L516.6 129.1Z"/><path color="#727686" d="M518.9 116.6L523.9 116.6L522.7 121.9L517.9 122Z"/><path color="#727686" d="M519.9 111.2L525.2 111.2L523.9 116.6L518.9 116.6Z"/><path color="#575a66" d="M497.6 232L497.7 230.9L491.9 252.1L492.7 253.3Z"/><path color="#6d7181" d="M502.4 210.7L503.5 209.8L497.7 230.9L497.6 232Z"/><path color="#707383" d="M507.3 189.4L509.2 188.7L503.5 209.8L502.4 210.7Z"/><path color="#5a5d6a" d="M439.9 442.2L431.2 439.2L424.6 460.2L434.1 463.3Z"/><path color="#717585" d="M512.2 168.1L515 167.6L509.2 188.7L507.3 189.4Z"/><path color="#727686" d="M517 146.8L520.8 146.4L515 167.6L512.2 168.1Z"/><path color="#737787" d="M519.1 137.9L523.2 137.6L520.8 146.4L517 146.8Z"/><path color="#737787" d="M521.1 129L525.6 128.8L523.2 137.6L519.1 137.9Z"/><path color="#737787" d="M522.7 121.9L527.5 121.8L525.6 128.8L521.1 129Z"/><path color="#575a66" d="M457.2 378.8L451.2 376.4L444.6 397.4L451.4 400Z"/><path color="#737787" d="M523.9 116.6L529 116.5L527.5 121.8L522.7 121.9Z"/><path color="#737787" d="M525.2 111.2L530.4 111.2L529 116.5L523.9 116.6Z"/><path color="#575a66" d="M497.7 230.9L497.9 229.9L491.2 250.8L491.9 252.1Z"/><path color="#6f7282" d="M503.5 209.8L504.6 208.9L497.9 229.9L497.7 230.9Z"/><path color="#717585" d="M509.2 188.7L511.3 188L504.6 208.9L503.5 209.8Z"/><path color="#727687" d="M515 167.6L517.9 167L511.3 188L509.2 188.7Z"/><path color="#737788" d="M520.8 146.4L524.6 146.1L517.9 167L515 167.6Z"/><path color="#747888" d="M523.2 137.6L527.4 137.4L524.6 146.1L520.8 146.4Z"/><path color="#747889" d="M525.6 128.8L530.1 128.7L527.4 137.4L523.2 137.6Z"/><path color="#575a67" d="M431.2 439.2L423 436.2L415.4 457L424.6 460.2Z"/><path color="#747889" d="M527.5 121.8L532.4 121.7L530.1 128.7L525.6 128.8Z"/><path color="#747889" d="M529 116.5L534 116.4L532.4 121.7L527.5 121.8Z"/><path color="#747889" d="M530.4 111.2L535.7 111.2L534 116.4L529 116.5Z"/><path color="#575a66" d="M444.6 397.4L438 394.7L430.5 415.5L437.9 418.3Z"/><path color="#575a66" d="M451.2 376.4L445.6 374L438 394.7L444.6 397.4Z"/><path color="#575a66" d="M497.9 229.9L498.3 228.8L490.8 249.5L491.2 250.8Z"/><path color="#707484" d="M504.6 208.9L505.8 208L498.3 228.8L497.9 229.9Z"/><path color="#727686" d="M511.3 188L513.4 187.3L505.8 208L504.6 208.9Z"/><path color="#747888" d="M517.9 167L520.9 166.5L513.4 187.3L511.3 188Z"/><path color="#757989" d="M524.6 146.1L528.4 145.8L520.9 166.5L517.9 167Z"/><path color="#75798a" d="M527.4 137.4L531.6 137.1L528.4 145.8L524.6 146.1Z"/><path color="#75798a" d="M530.1 128.7L534.7 128.5L531.6 137.1L527.4 137.4Z"/><path color="#767a8a" d="M532.4 121.7L537.2 121.6L534.7 128.5L530.1 128.7Z"/><path color="#767a8a" d="M534 116.4L539.1 116.4L537.2 121.6L532.4 121.7Z"/><path color="#767a8a" d="M535.7 111.2L541 111.2L539.1 116.4L534 116.4Z"/><path color="#575a66" d="M423 436.2L415.1 433.2L406.8 453.8L415.4 457Z"/><path color="#575a66" d="M438 394.7L431.9 392.1L423.5 412.6L430.5 415.5Z"/><path color="#575a66" d="M498.3 228.8L498.8 227.7L490.4 248.2L490.8 249.5Z"/><path color="#717586" d="M505.8 208L507.2 207.1L498.8 227.7L498.3 228.8Z"/><path color="#737788" d="M513.4 187.3L515.6 186.6L507.2 207.1L505.8 208Z"/><path color="#75798a" d="M520.9 166.5L523.9 166L515.6 186.6L513.4 187.3Z"/><path color="#767a8b" d="M528.4 145.8L532.3 145.5L523.9 166L520.9 166.5Z"/><path color="#777b8c" d="M531.6 137.1L535.8 136.9L532.3 145.5L528.4 145.8Z"/><path color="#777b8c" d="M534.7 128.5L539.3 128.3L535.8 136.9L531.6 137.1Z"/><path color="#777c8c" d="M537.2 121.6L542.1 121.5L539.3 128.3L534.7 128.5Z"/><path color="#787c8c" d="M539.1 116.4L544.1 116.3L542.1 121.5L537.2 121.6Z"/><path color="#787c8c" d="M541 111.2L546.2 111.2L544.1 116.3L539.1 116.4Z"/><path color="#575a66" d="M415.1 433.2L407.7 430.2L398.5 450.5L406.8 453.8Z"/><path color="#575a66" d="M431.9 392.1L426.1 389.5L416.9 409.8L423.5 412.6Z"/><path color="#575a66" d="M498.8 227.7L499.5 226.6L490.3 246.9L490.4 248.2Z"/><path color="#737787" d="M507.2 207.1L508.7 206.2L499.5 226.6L498.8 227.7Z"/><path color="#747889" d="M515.6 186.6L517.9 185.9L508.7 206.2L507.2 207.1Z"/><path color="#767a8b" d="M523.9 166L527 165.5L517.9 185.9L515.6 186.6Z"/><path color="#777b8c" d="M532.3 145.5L536.2 145.1L527 165.5L523.9 166Z"/><path color="#787d8d" d="M535.8 136.9L540 136.6L536.2 145.1L532.3 145.5Z"/><path color="#797d8e" d="M539.3 128.3L543.9 128.2L540 136.6L535.8 136.9Z"/><path color="#7a7e8f" d="M542.1 121.5L546.9 121.4L543.9 128.2L539.3 128.3Z"/><path color="#7a7e8f" d="M544.1 116.3L549.2 116.3L546.9 121.4L542.1 121.5Z"/><path color="#7a7e8f" d="M546.2 111.2L551.5 111.2L549.2 116.3L544.1 116.3Z"/><path color="#7e8293" d="M551.5 111.2L556.8 111.2L554.3 116.2L549.2 116.3Z"/><path color="#7e8293" d="M549.2 116.3L554.3 116.2L551.8 121.3L546.9 121.4Z"/><path color="#7d8292" d="M546.9 121.4L551.8 121.3L548.5 128L543.9 128.2Z"/><path color="#7c8091" d="M543.9 128.2L548.5 128L544.3 136.4L540 136.6Z"/><path color="#7b7f90" d="M540 136.6L544.3 136.4L540.2 144.8L536.2 145.1Z"/><path color="#787c8e" d="M536.2 145.1L540.2 144.8L530.2 165L527 165.5Z"/><path color="#777b8c" d="M527 165.5L530.2 165L520.3 185.1L517.9 185.9Z"/><path color="#767a8a" d="M517.9 185.9L520.3 185.1L510.3 205.3L508.7 206.2Z"/><path color="#747888" d="M508.7 206.2L510.3 205.3L500.3 225.5L499.5 226.6Z"/><path color="#575a66" d="M499.5 226.6L500.3 225.5L490.4 245.6L490.3 246.9Z"/><path color="#575a66" d="M426.1 389.5L420.6 386.8L410.7 407L416.9 409.8Z"/><path color="#575a66" d="M407.7 430.2L400.7 427.1L390.8 447.3L398.5 450.5Z"/><path color="#838798" d="M556.8 111.2L562 111.2L559.4 116.2L554.3 116.2Z"/><path color="#838798" d="M554.3 116.2L559.4 116.2L556.7 121.2L551.8 121.3Z"/><path color="#828697" d="M551.8 121.3L556.7 121.2L553.1 127.8L548.5 128Z"/><path color="#808495" d="M548.5 128L553.1 127.8L548.7 136.2L544.3 136.4Z"/><path color="#7d8192" d="M544.3 136.4L548.7 136.2L544.2 144.5L540.2 144.8Z"/><path color="#7a7e8f" d="M540.2 144.8L544.2 144.5L533.5 164.5L530.2 165Z"/><path color="#787c8d" d="M530.2 165L533.5 164.5L522.8 184.4L520.3 185.1Z"/><path color="#777b8c" d="M520.3 185.1L522.8 184.4L512.1 204.4L510.3 205.3Z"/><path color="#75798a" d="M510.3 205.3L512.1 204.4L501.3 224.4L500.3 225.5Z"/><path color="#737787" d="M500.3 225.5L501.3 224.4L490.6 244.4L490.4 245.6Z"/><path color="#575a66" d="M490.4 245.6L490.6 244.4L479.9 264.3L480.4 265.8Z"/><path color="#575a66" d="M420.6 386.8L415.6 384.2L404.9 404.2L410.7 407Z"/><path color="#575a66" d="M400.7 427.1L394.2 424.1L383.5 444.1L390.8 447.3Z"/><path color="#8a8e9f" d="M562 111.2L567.3 111.2L564.5 116.1L559.4 116.2Z"/><path color="#898e9e" d="M559.4 116.2L564.5 116.1L561.6 121.1L556.7 121.2Z"/><path color="#888c9d" d="M556.7 121.2L561.6 121.1L557.8 127.7L553.1 127.8Z"/><path color="#848899" d="M553.1 127.8L557.8 127.7L553 135.9L548.7 136.2Z"/><path color="#808495" d="M548.7 136.2L553 135.9L548.3 144.2L544.2 144.5Z"/><path color="#7b7f91" d="M544.2 144.5L548.3 144.2L536.8 163.9L533.5 164.5Z"/><path color="#797d8e" d="M533.5 164.5L536.8 163.9L525.4 183.7L522.8 184.4Z"/><path color="#777c8d" d="M522.8 184.4L525.4 183.7L514 203.5L512.1 204.4Z"/><path color="#767a8b" d="M512.1 204.4L514 203.5L502.5 223.3L501.3 224.4Z"/><path color="#747889" d="M501.3 224.4L502.5 223.3L491.1 243.1L490.6 244.4Z"/><path color="#575a66" d="M490.6 244.4L491.1 243.1L479.7 262.9L479.9 264.3Z"/><path color="#9296a7" d="M567.3 111.2L572.6 111.2L569.6 116.1L564.5 116.1Z"/><path color="#9195a6" d="M564.5 116.1L569.6 116.1L566.5 121L561.6 121.1Z"/><path color="#8e92a3" d="M561.6 121.1L566.5 121L562.5 127.5L557.8 127.7Z"/><path color="#898d9e" d="M557.8 127.7L562.5 127.5L557.4 135.7L553 135.9Z"/><path color="#575a66" d="M415.6 384.2L411.1 381.6L399.7 401.4L404.9 404.2Z"/><path color="#838798" d="M553 135.9L557.4 135.7L552.4 143.8L548.3 144.2Z"/><path color="#7d8192" d="M548.3 144.2L552.4 143.8L540.3 163.4L536.8 163.9Z"/><path color="#575a66" d="M394.2 424.1L388.2 421.2L376.8 440.9L383.5 444.1Z"/><path color="#7a7e8f" d="M536.8 163.9L540.3 163.4L528.2 183L525.4 183.7Z"/><path color="#787d8e" d="M525.4 183.7L528.2 183L516 202.6L514 203.5Z"/><path color="#777b8c" d="M514 203.5L516 202.6L503.9 222.2L502.5 223.3Z"/><path color="#75798a" d="M502.5 223.3L503.9 222.2L491.8 241.8L491.1 243.1Z"/><path color="#575a66" d="M491.1 243.1L491.8 241.8L479.7 261.4L479.7 262.9Z"/><path color="#9a9eae" d="M572.6 111.2L577.9 111.2L574.7 116L569.6 116.1Z"/><path color="#979cac" d="M569.6 116.1L574.7 116L571.5 120.9L566.5 121Z"/><path color="#9398a8" d="M566.5 121L571.5 120.9L567.2 127.4L562.5 127.5Z"/><path color="#8d91a2" d="M562.5 127.5L567.2 127.4L561.9 135.4L557.4 135.7Z"/><path color="#858a9b" d="M557.4 135.7L561.9 135.4L556.6 143.5L552.4 143.8Z"/><path color="#7e8293" d="M552.4 143.8L556.6 143.5L543.8 162.9L540.3 163.4Z"/><path color="#7b7f90" d="M540.3 163.4L543.8 162.9L531 182.4L528.2 183Z"/><path color="#797d8f" d="M528.2 183L531 182.4L518.3 201.8L516 202.6Z"/><path color="#575a66" d="M411.1 381.6L407 379L394.8 398.6L399.7 401.4Z"/><path color="#787c8d" d="M516 202.6L518.3 201.8L505.5 221.2L503.9 222.2Z"/><path color="#a0a4b5" d="M577.9 111.2L583.1 111.2L579.8 116L574.7 116Z"/><path color="#575a66" d="M388.2 421.2L382.7 418.2L370.6 437.8L376.8 440.9Z"/><path color="#767a8b" d="M503.9 222.2L505.5 221.2L492.7 240.6L491.8 241.8Z"/><path color="#9da1b2" d="M574.7 116L579.8 116L576.4 120.8L571.5 120.9Z"/><path color="#979cac" d="M571.5 120.9L576.4 120.8L572 127.2L567.2 127.4Z"/><path color="#8f94a5" d="M567.2 127.4L572 127.2L566.4 135.2L561.9 135.4Z"/><path color="#575a66" d="M491.8 241.8L492.7 240.6L479.9 260L479.7 261.4Z"/><path color="#878c9d" d="M561.9 135.4L566.4 135.2L560.8 143.2L556.6 143.5Z"/><path color="#575a66" d="M479.7 261.4L479.9 260L467.2 279.4L467.6 281Z"/><path color="#7f8395" d="M556.6 143.5L560.8 143.2L547.4 162.4L543.8 162.9Z"/><path color="#7b8091" d="M543.8 162.9L547.4 162.4L534 181.7L531 182.4Z"/><path color="#7a7e90" d="M531 182.4L534 181.7L520.6 200.9L518.3 201.8Z"/><path color="#a4a8b9" d="M583.1 111.2L588.4 111.2L584.9 115.9L579.8 116Z"/><path color="#a0a4b5" d="M579.8 116L584.9 115.9L581.4 120.7L576.4 120.8Z"/><path color="#797d8e" d="M518.3 201.8L520.6 200.9L507.3 220.1L505.5 221.2Z"/><path color="#9a9eaf" d="M576.4 120.8L581.4 120.7L576.8 127L572 127.2Z"/><path color="#9195a6" d="M572 127.2L576.8 127L570.9 135L566.4 135.2Z"/><path color="#777b8d" d="M505.5 221.2L507.3 220.1L493.9 239.4L492.7 240.6Z"/><path color="#888d9e" d="M566.4 135.2L570.9 135L565.1 142.9L560.8 143.2Z"/><path color="#575a66" d="M407 379L403.3 376.5L390.5 395.9L394.8 398.6Z"/><path color="#808496" d="M560.8 143.2L565.1 142.9L551.1 162L547.4 162.4Z"/><path color="#575a66" d="M492.7 240.6L493.9 239.4L480.5 258.6L479.9 260Z"/><path color="#575a66" d="M394.8 398.6L390.5 395.9L377.8 415.3L382.7 418.2Z"/><path color="#575a66" d="M382.7 418.2L377.8 415.3L365 434.7L370.6 437.8Z"/><path color="#575a66" d="M479.9 260L480.5 258.6L467.1 277.8L467.2 279.4Z"/><path color="#7c8092" d="M547.4 162.4L551.1 162L537.2 181L534 181.7Z"/><path color="#a5a9ba" d="M588.4 111.2L593.7 111.2L590 115.9L584.9 115.9Z"/><path color="#a0a4b5" d="M584.9 115.9L590 115.9L586.4 120.6L581.4 120.7Z"/><path color="#7b7f91" d="M534 181.7L537.2 181L523.2 200.1L520.6 200.9Z"/><path color="#999eaf" d="M581.4 120.7L586.4 120.6L581.6 126.9L576.8 127Z"/><path color="#9195a6" d="M576.8 127L581.6 126.9L575.5 134.8L570.9 135Z"/><path color="#7a7e8f" d="M520.6 200.9L523.2 200.1L509.2 219.1L507.3 220.1Z"/><path color="#898d9e" d="M570.9 135L575.5 134.8L569.5 142.6L565.1 142.9Z"/><path color="#808596" d="M565.1 142.9L569.5 142.6L555 161.5L551.1 162Z"/><path color="#787c8e" d="M507.3 220.1L509.2 219.1L495.3 238.2L493.9 239.4Z"/><path color="#777b8c" d="M493.9 239.4L495.3 238.2L481.3 257.2L480.5 258.6Z"/><path color="#a3a8b8" d="M593.7 111.2L598.9 111.2L595.2 115.8L590 115.9Z"/><path color="#7d8193" d="M551.1 162L555 161.5L540.4 180.4L537.2 181Z"/><path color="#9ea3b3" d="M590 115.9L595.2 115.8L591.4 120.5L586.4 120.6Z"/><path color="#575a66" d="M403.3 376.5L400.1 374L386.8 393.2L390.5 395.9Z"/><path color="#989cad" d="M586.4 120.6L591.4 120.5L586.4 126.7L581.6 126.9Z"/><path color="#575a66" d="M480.5 258.6L481.3 257.2L467.3 276.3L467.1 277.8Z"/><path color="#9094a5" d="M581.6 126.9L586.4 126.7L580.2 134.5L575.5 134.8Z"/><path color="#7b8091" d="M537.2 181L540.4 180.4L525.9 199.3L523.2 200.1Z"/><path color="#575a66" d="M390.5 395.9L386.8 393.2L373.4 412.4L377.8 415.3Z"/><path color="#888d9e" d="M575.5 134.8L580.2 134.5L573.9 142.3L569.5 142.6Z"/><path color="#575a66" d="M377.8 415.3L373.4 412.4L360 431.7L365 434.7Z"/><path color="#7a7e90" d="M523.2 200.1L525.9 199.3L511.4 218.1L509.2 219.1Z"/><path color="#818597" d="M569.5 142.6L573.9 142.3L558.9 161L555 161.5Z"/><path color="#a0a4b5" d="M598.9 111.2L604.2 111.2L600.3 115.8L595.2 115.8Z"/><path color="#797d8f" d="M509.2 219.1L511.4 218.1L496.9 237L495.3 238.2Z"/><path color="#9b9fb0" d="M595.2 115.8L600.3 115.8L596.5 120.4L591.4 120.5Z"/><path color="#7d8293" d="M555 161.5L558.9 161L543.9 179.8L540.4 180.4Z"/><path color="#9599aa" d="M591.4 120.5L596.5 120.4L591.3 126.6L586.4 126.7Z"/><path color="#787c8d" d="M495.3 238.2L496.9 237L482.4 255.9L481.3 257.2Z"/><path color="#8e92a4" d="M586.4 126.7L591.3 126.6L584.8 134.3L580.2 134.5Z"/><path color="#7c8092" d="M540.4 180.4L543.9 179.8L528.8 198.5L525.9 199.3Z"/><path color="#888c9d" d="M580.2 134.5L584.8 134.3L578.4 142.1L573.9 142.3Z"/><path color="#575a66" d="M481.3 257.2L482.4 255.9L467.9 274.8L467.3 276.3Z"/><path color="#818597" d="M573.9 142.3L578.4 142.1L562.9 160.6L558.9 161Z"/><path color="#9b9fb0" d="M604.2 111.2L609.5 111.1L605.5 115.7L600.3 115.8Z"/><path color="#7b7f91" d="M525.9 199.3L528.8 198.5L513.8 217.2L511.4 218.1Z"/><path color="#575a66" d="M467.3 276.3L467.9 274.8L453.4 293.6L453.4 295.3Z"/><path color="#979bac" d="M600.3 115.8L605.5 115.7L601.5 120.3L596.5 120.4Z"/><path color="#575a66" d="M386.8 393.2L383.5 390.6L369.5 409.6L373.4 412.4Z"/><path color="#9296a7" d="M596.5 120.4L601.5 120.3L596.2 126.5L591.3 126.6Z"/><path color="#7e8294" d="M558.9 161L562.9 160.6L547.4 179.2L543.9 179.8Z"/><path color="#7a7e90" d="M511.4 218.1L513.8 217.2L498.8 235.9L496.9 237Z"/><path color="#8c90a2" d="M591.3 126.6L596.2 126.5L589.6 134.1L584.8 134.3Z"/><path color="#575a66" d="M373.4 412.4L369.5 409.6L355.6 428.7L360 431.7Z"/><path color="#878b9d" d="M584.8 134.3L589.6 134.1L582.9 141.8L578.4 142.1Z"/><path color="#797d8e" d="M496.9 237L498.8 235.9L483.8 254.6L482.4 255.9Z"/><path color="#7d8193" d="M543.9 179.8L547.4 179.2L531.9 197.7L528.8 198.5Z"/><path color="#969bac" d="M609.5 111.1L614.7 111.1L610.7 115.7L605.5 115.7Z"/><path color="#818698" d="M578.4 142.1L582.9 141.8L567 160.2L562.9 160.6Z"/><path color="#9397a8" d="M605.5 115.7L610.7 115.7L606.6 120.3L601.5 120.3Z"/><path color="#777c8d" d="M482.4 255.9L483.8 254.6L468.8 273.3L467.9 274.8Z"/><path color="#8f93a5" d="M601.5 120.3L606.6 120.3L601.2 126.3L596.2 126.5Z"/><path color="#7c8092" d="M528.8 198.5L531.9 197.7L516.4 216.2L513.8 217.2Z"/><path color="#8a8ea0" d="M596.2 126.5L601.2 126.3L594.4 133.9L589.6 134.1Z"/><path color="#7e8395" d="M562.9 160.6L567 160.2L551.1 178.6L547.4 179.2Z"/><path color="#575a66" d="M467.9 274.8L468.8 273.3L453.7 292L453.4 293.6Z"/><path color="#7b7f90" d="M513.8 217.2L516.4 216.2L500.9 234.8L498.8 235.9Z"/><path color="#868a9c" d="M589.6 134.1L594.4 133.9L587.6 141.5L582.9 141.8Z"/><path color="#9297a8" d="M614.7 111.1L620 111.1L615.9 115.7L610.7 115.7Z"/><path color="#575a66" d="M383.5 390.6L380.8 388L366.3 406.9L369.5 409.6Z"/><path color="#7d8193" d="M547.4 179.2L551.1 178.6L535.2 197L531.9 197.7Z"/><path color="#8f94a5" d="M610.7 115.7L615.9 115.7L611.7 120.2L606.6 120.3Z"/><path color="#828698" d="M582.9 141.8L587.6 141.5L571.3 159.8L567 160.2Z"/><path color="#797e8f" d="M498.8 235.9L500.9 234.8L485.5 253.3L483.8 254.6Z"/><path color="#8c90a2" d="M606.6 120.3L611.7 120.2L606.1 126.2L601.2 126.3Z"/><path color="#575a66" d="M369.5 409.6L366.3 406.9L351.8 425.8L355.6 428.7Z"/><path color="#888d9f" d="M601.2 126.3L606.1 126.2L599.2 133.8L594.4 133.9Z"/><path color="#7c8192" d="M531.9 197.7L535.2 197L519.3 215.3L516.4 216.2Z"/><path color="#787d8e" d="M483.8 254.6L485.5 253.3L470 271.9L468.8 273.3Z"/><path color="#7f8395" d="M567 160.2L571.3 159.8L554.9 178L551.1 178.6Z"/><path color="#858a9b" d="M594.4 133.9L599.2 133.8L592.2 141.3L587.6 141.5Z"/><path color="#8f93a5" d="M620 111.1L625.3 111.1L621 115.6L615.9 115.7Z"/><path color="#575a66" d="M468.8 273.3L470 271.9L454.5 290.4L453.7 292Z"/><path color="#7b8091" d="M516.4 216.2L519.3 215.3L503.3 233.7L500.9 234.8Z"/><path color="#8c91a2" d="M615.9 115.7L621 115.6L616.8 120.1L611.7 120.2Z"/><path color="#828698" d="M587.6 141.5L592.2 141.3L575.6 159.4L571.3 159.8Z"/><path color="#7e8294" d="M551.1 178.6L554.9 178L538.6 196.2L535.2 197Z"/><path color="#8a8ea0" d="M611.7 120.2L616.8 120.1L611.1 126.1L606.1 126.2Z"/><path color="#575a66" d="M453.7 292L454.5 290.4L439 309L438.7 310.7Z"/><path color="#878c9d" d="M606.1 126.2L611.1 126.1L604.1 133.6L599.2 133.8Z"/><path color="#7a7f90" d="M500.9 234.8L503.3 233.7L487.4 252.1L485.5 253.3Z"/><path color="#85899b" d="M599.2 133.8L604.1 133.6L597 141.1L592.2 141.3Z"/><path color="#7d8193" d="M535.2 197L538.6 196.2L522.3 214.5L519.3 215.3Z"/><path color="#575a66" d="M380.8 388L378.6 385.6L363.6 404.3L366.3 406.9Z"/><path color="#8c90a2" d="M625.3 111.1L630.6 111.1L626.2 115.6L621 115.6Z"/><path color="#7f8496" d="M571.3 159.8L575.6 159.4L558.9 177.5L554.9 178Z"/><path color="#8a8fa0" d="M621 115.6L626.2 115.6L621.9 120L616.8 120.1Z"/><path color="#797d8f" d="M485.5 253.3L487.4 252.1L471.5 270.5L470 271.9Z"/><path color="#575a66" d="M366.3 406.9L363.6 404.3L348.6 423L351.8 425.8Z"/><path color="#888d9f" d="M616.8 120.1L621.9 120L616.2 126L611.1 126.1Z"/><path color="#828698" d="M592.2 141.3L597 141.1L580 159L575.6 159.4Z"/><path color="#7c8092" d="M519.3 215.3L522.3 214.5L506 232.7L503.3 233.7Z"/><path color="#7e8395" d="M554.9 178L558.9 177.5L542.3 195.6L538.6 196.2Z"/><path color="#868b9c" d="M611.1 126.1L616.2 126L609 133.4L604.1 133.6Z"/><path color="#787c8e" d="M470 271.9L471.5 270.5L455.6 288.9L454.5 290.4Z"/><path color="#8a8ea0" d="M630.6 111.1L635.8 111.1L631.5 115.5L626.2 115.6Z"/><path color="#84899b" d="M604.1 133.6L609 133.4L601.8 140.8L597 141.1Z"/><path color="#7b7f91" d="M503.3 233.7L506 232.7L489.7 251L487.4 252.1Z"/><path color="#808496" d="M575.6 159.4L580 159L563 177L558.9 177.5Z"/><path color="#888d9f" d="M626.2 115.6L631.5 115.5L627.1 120L621.9 120Z"/><path color="#575a66" d="M454.5 290.4L455.6 288.9L439.7 307.3L439 309Z"/><path color="#7d8294" d="M538.6 196.2L542.3 195.6L525.6 213.7L522.3 214.5Z"/><path color="#878b9d" d="M621.9 120L627.1 120L621.3 125.9L616.2 126Z"/><path color="#828698" d="M597 141.1L601.8 140.8L584.6 158.7L580 159Z"/><path color="#7a7e90" d="M487.4 252.1L489.7 251L473.4 269.2L471.5 270.5Z"/><path color="#858a9c" d="M616.2 126L621.3 125.9L614 133.3L609 133.4Z"/><path color="#575a66" d="M439 309L439.7 307.3L423.7 325.7L423.5 327.5Z"/><path color="#575a66" d="M378.6 385.6L377 383.1L361.5 401.7L363.6 404.3Z"/><path color="#7f8395" d="M558.9 177.5L563 177L546.1 194.9L542.3 195.6Z"/><path color="#7d8193" d="M522.3 214.5L525.6 213.7L508.9 231.8L506 232.7Z"/><path color="#888d9f" d="M635.8 111.1L641.1 111.1L636.7 115.5L631.5 115.5Z"/><path color="#84889a" d="M609 133.4L614 133.3L606.7 140.6L601.8 140.8Z"/><path color="#878c9e" d="M631.5 115.5L636.7 115.5L632.3 119.9L627.1 120Z"/><path color="#797d8f" d="M471.5 270.5L473.4 269.2L457.1 287.4L455.6 288.9Z"/><path color="#575a66" d="M363.6 404.3L361.5 401.7L346 420.2L348.6 423Z"/><path color="#808597" d="M580 159L584.6 158.7L567.3 176.5L563 177Z"/><path color="#868b9d" d="M627.1 120L632.3 119.9L626.4 125.8L621.3 125.9Z"/><path color="#7c8092" d="M506 232.7L508.9 231.8L492.3 249.9L489.7 251Z"/><path color="#7e8294" d="M542.3 195.6L546.1 194.9L529.1 212.9L525.6 213.7Z"/><path color="#828799" d="M601.8 140.8L606.7 140.6L589.2 158.3L584.6 158.7Z"/><path color="#85899b" d="M621.3 125.9L626.4 125.8L619 133.1L614 133.3Z"/><path color="#575a66" d="M455.6 288.9L457.1 287.4L440.8 305.7L439.7 307.3Z"/><path color="#878c9e" d="M641.1 111.1L646.4 111.1L641.9 115.5L636.7 115.5Z"/><path color="#7f8396" d="M563 177L567.3 176.5L550.1 194.3L546.1 194.9Z"/><path color="#84889a" d="M614 133.3L619 133.1L611.6 140.4L606.7 140.6Z"/><path color="#868b9d" d="M636.7 115.5L641.9 115.5L637.5 119.9L632.3 119.9Z"/><path color="#7b7f91" d="M489.7 251L492.3 249.9L475.6 267.9L473.4 269.2Z"/><path color="#7d8193" d="M525.6 213.7L529.1 212.9L512.1 230.8L508.9 231.8Z"/><path color="#575a66" d="M439.7 307.3L440.8 305.7L424.5 323.9L423.7 325.7Z"/><path color="#868a9c" d="M632.3 119.9L637.5 119.9L631.5 125.7L626.4 125.8Z"/><path color="#818597" d="M584.6 158.7L589.2 158.3L571.7 176.1L567.3 176.5Z"/><path color="#828799" d="M606.7 140.6L611.6 140.4L594 158L589.2 158.3Z"/><path color="#575a66" d="M377 383.1L376 380.8L360.1 399.2L361.5 401.7Z"/><path color="#85899b" d="M626.4 125.8L631.5 125.7L624.1 133L619 133.1Z"/><path color="#7a7e90" d="M473.4 269.2L475.6 267.9L459 286L457.1 287.4Z"/><path color="#868b9d" d="M646.4 111.1L651.6 111.1L647.2 115.5L641.9 115.5Z"/><path color="#7e8395" d="M546.1 194.9L550.1 194.3L532.8 212.2L529.1 212.9Z"/><path color="#7c8192" d="M508.9 231.8L512.1 230.8L495.2 248.8L492.3 249.9Z"/><path color="#575a66" d="M423.7 325.7L424.5 323.9L408.1 342.1L407.8 344.1Z"/><path color="#868a9c" d="M641.9 115.5L647.2 115.5L642.7 119.8L637.5 119.9Z"/><path color="#84889a" d="M619 133.1L624.1 133L616.7 140.3L611.6 140.4Z"/><path color="#575a66" d="M361.5 401.7L360.1 399.2L344.1 417.6L346 420.2Z"/><path color="#808496" d="M567.3 176.5L571.7 176.1L554.3 193.8L550.1 194.3Z"/><path color="#858a9c" d="M637.5 119.9L642.7 119.8L636.7 125.6L631.5 125.7Z"/><path color="#797e8f" d="M457.1 287.4L459 286L442.3 304.1L440.8 305.7Z"/><path color="#575a66" d="M407.8 344.1L408.1 342.1L391.8 360.4L391.9 362.4Z"/><path color="#7e8294" d="M529.1 212.9L532.8 212.2L515.6 230L512.1 230.8Z"/><path color="#818597" d="M589.2 158.3L594 158L576.3 175.6L571.7 176.1Z"/><path color="#7c8092" d="M492.3 249.9L495.2 248.8L478.2 266.8L475.6 267.9Z"/><path color="#84899b" d="M631.5 125.7L636.7 125.6L629.2 132.9L624.1 133Z"/><path color="#868a9c" d="M651.6 111.1L656.9 111.1L652.4 115.4L647.2 115.5Z"/><path color="#828799" d="M611.6 140.4L616.7 140.3L598.8 157.8L594 158Z"/><path color="#575a66" d="M440.8 305.7L442.3 304.1L425.6 322.2L424.5 323.9Z"/><path color="#858a9c" d="M647.2 115.5L652.4 115.4L647.9 119.8L642.7 119.8Z"/><path color="#7f8395" d="M550.1 194.3L554.3 193.8L536.8 211.5L532.8 212.2Z"/><path color="#84889a" d="M624.1 133L629.2 132.9L621.7 140.1L616.7 140.3Z"/><path color="#7b7f91" d="M475.6 267.9L478.2 266.8L461.2 284.7L459 286Z"/><path color="#7d8193" d="M512.1 230.8L515.6 230L498.3 247.8L495.2 248.8Z"/><path color="#85899b" d="M642.7 119.8L647.9 119.8L641.9 125.5L636.7 125.6Z"/><path color="#808497" d="M571.7 176.1L576.3 175.6L558.6 193.2L554.3 193.8Z"/><path color="#575a66" d="M376 380.8L375.5 378.6L359.2 396.9L360.1 399.2Z"/><path color="#575a66" d="M424.5 323.9L425.6 322.2L409 340.3L408.1 342.1Z"/><path color="#868a9c" d="M656.9 111.1L662.2 111.1L657.7 115.4L652.4 115.4Z"/><path color="#818698" d="M594 158L598.8 157.8L581 175.3L576.3 175.6Z"/><path color="#84899b" d="M636.7 125.6L641.9 125.5L634.4 132.8L629.2 132.9Z"/><path color="#838799" d="M616.7 140.3L621.7 140.1L603.8 157.5L598.8 157.8Z"/><path color="#7e8395" d="M532.8 212.2L536.8 211.5L519.3 229.2L515.6 230Z"/><path color="#7a7e90" d="M459 286L461.2 284.7L444.2 302.7L442.3 304.1Z"/><path color="#858a9c" d="M652.4 115.4L657.7 115.4L653.1 119.7L647.9 119.8Z"/><path color="#7c8192" d="M495.2 248.8L498.3 247.8L481.1 265.6L478.2 266.8Z"/><path color="#575a66" d="M360.1 399.2L359.2 396.9L342.9 415.1L344.1 417.6Z"/><path color="#84889a" d="M629.2 132.9L634.4 132.8L626.9 140L621.7 140.1Z"/><path color="#575a66" d="M408.1 342.1L409 340.3L392.3 358.4L391.8 360.4Z"/><path color="#85899b" d="M647.9 119.8L653.1 119.7L647.1 125.5L641.9 125.5Z"/><path color="#7f8496" d="M554.3 193.8L558.6 193.2L540.9 210.8L536.8 211.5Z"/><path color="#858a9c" d="M662.2 111.1L667.4 111.1L662.9 115.4L657.7 115.4Z"/><path color="#7a7e8f" d="M442.3 304.1L444.2 302.7L427.3 320.6L425.6 322.2Z"/><path color="#808597" d="M576.3 175.6L581 175.3L563.2 192.8L558.6 193.2Z"/><path color="#7e8294" d="M515.6 230L519.3 229.2L501.8 246.9L498.3 247.8Z"/><path color="#84899b" d="M641.9 125.5L647.1 125.5L639.6 132.7L634.4 132.8Z"/><path color="#7c8092" d="M478.2 266.8L481.1 265.6L463.8 283.5L461.2 284.7Z"/><path color="#828698" d="M598.8 157.8L603.8 157.5L585.8 174.9L581 175.3Z"/><path color="#575a66" d="M391.8 360.4L392.3 358.4L375.6 376.5L375.5 378.6Z"/><path color="#838799" d="M621.7 140.1L626.9 140L608.8 157.3L603.8 157.5Z"/><path color="#85899c" d="M657.7 115.4L662.9 115.4L658.4 119.7L653.1 119.7Z"/><path color="#84889a" d="M634.4 132.8L639.6 132.7L632.1 139.8L626.9 140Z"/><path color="#7f8395" d="M536.8 211.5L540.9 210.8L523.3 228.4L519.3 229.2Z"/><path color="#85899b" d="M653.1 119.7L658.4 119.7L652.4 125.4L647.1 125.5Z"/><path color="#575a66" d="M425.6 322.2L427.3 320.6L410.3 338.6L409 340.3Z"/><path color="#7d8193" d="M498.3 247.8L501.8 246.9L484.3 264.6L481.1 265.6Z"/><path color="#7b7f91" d="M461.2 284.7L463.8 283.5L446.6 301.3L444.2 302.7Z"/><path color="#85899c" d="M667.4 111.1L672.7 111.1L668.2 115.4L662.9 115.4Z"/><path color="#808496" d="M558.6 193.2L563.2 192.8L545.3 210.2L540.9 210.8Z"/><path color="#84899b" d="M647.1 125.5L652.4 125.4L644.8 132.6L639.6 132.7Z"/><path color="#818597" d="M581 175.3L585.8 174.9L567.9 192.3L563.2 192.8Z"/><path color="#85899b" d="M662.9 115.4L668.2 115.4L663.7 119.7L658.4 119.7Z"/><path color="#83879a" d="M626.9 140L632.1 139.8L614 157.1L608.8 157.3Z"/><path color="#828699" d="M603.8 157.5L608.8 157.3L590.8 174.6L585.8 174.9Z"/><path color="#575a66" d="M409 340.3L410.3 338.6L393.3 356.5L392.3 358.4Z"/><path color="#7e8294" d="M519.3 229.2L523.3 228.4L505.6 246L501.8 246.9Z"/><path color="#575a66" d="M359.2 396.9L359 394.6L342.3 412.7L342.9 415.1Z"/><path color="#84889a" d="M639.6 132.7L644.8 132.6L637.3 139.7L632.1 139.8Z"/><path color="#85899b" d="M658.4 119.7L663.7 119.7L657.7 125.4L652.4 125.4Z"/><path color="#7a7f90" d="M444.2 302.7L446.6 301.3L429.3 319.1L427.3 320.6Z"/><path color="#7c8193" d="M481.1 265.6L484.3 264.6L466.9 282.3L463.8 283.5Z"/><path color="#85899c" d="M672.7 111.1L678 111.1L673.5 115.4L668.2 115.4Z"/><path color="#7f8496" d="M540.9 210.8L545.3 210.2L527.5 227.7L523.3 228.4Z"/><path color="#84899b" d="M652.4 125.4L657.7 125.4L650.2 132.5L644.8 132.6Z"/><path color="#575a66" d="M392.3 358.4L393.3 356.5L376.3 374.5L375.6 376.5Z"/><path color="#85899b" d="M668.2 115.4L673.5 115.4L669 119.6L663.7 119.7Z"/><path color="#808597" d="M563.2 192.8L567.9 192.3L549.9 209.7L545.3 210.2Z"/><path color="#7e8294" d="M501.8 246.9L505.6 246L487.9 263.6L484.3 264.6Z"/><path color="#83889a" d="M632.1 139.8L637.3 139.7L619.2 156.9L614 157.1Z"/><path color="#818698" d="M585.8 174.9L590.8 174.6L572.8 191.9L567.9 192.3Z"/><path color="#7a7e90" d="M427.3 320.6L429.3 319.1L412.1 337L410.3 338.6Z"/><path color="#828799" d="M608.8 157.3L614 157.1L595.9 174.3L590.8 174.6Z"/><path color="#7c8092" d="M463.8 283.5L466.9 282.3L449.4 300L446.6 301.3Z"/><path color="#85899b" d="M663.7 119.7L669 119.6L663 125.3L657.7 125.4Z"/><path color="#84889b" d="M644.8 132.6L650.2 132.5L642.6 139.6L637.3 139.7Z"/><path color="#575a66" d="M375.6 376.5L376.3 374.5L359.4 392.5L359 394.6Z"/><path color="#85899b" d="M678 111.1L683.3 111.1L678.8 115.3L673.5 115.4Z"/><path color="#7f8395" d="M523.3 228.4L527.5 227.7L509.7 245.2L505.6 246Z"/><path color="#84899b" d="M657.7 125.4L663 125.3L655.5 132.4L650.2 132.5Z"/><path color="#85899b" d="M673.5 115.4L678.8 115.3L674.3 119.6L669 119.6Z"/><path color="#797d8f" d="M410.3 338.6L412.1 337L394.9 354.8L393.3 356.5Z"/><path color="#7d8193" d="M484.3 264.6L487.9 263.6L470.2 281.2L466.9 282.3Z"/><path color="#808496" d="M545.3 210.2L549.9 209.7L532 227.1L527.5 227.7Z"/><path color="#7b8091" d="M446.6 301.3L449.4 300L431.9 317.7L429.3 319.1Z"/><path color="#575a66" d="M359 394.6L359.4 392.5L342.4 410.4L342.3 412.7Z"/><path color="#83889a" d="M637.3 139.7L642.6 139.6L624.6 156.8L619.2 156.9Z"/><path color="#818597" d="M567.9 192.3L572.8 191.9L554.8 209.2L549.9 209.7Z"/><path color="#85899b" d="M669 119.6L674.3 119.6L668.3 125.3L663 125.3Z"/><path color="#838799" d="M614 157.1L619.2 156.9L601.2 174.1L595.9 174.3Z"/><path color="#828698" d="M590.8 174.6L595.9 174.3L577.8 191.6L572.8 191.9Z"/><path color="#84889b" d="M650.2 132.5L655.5 132.4L648 139.6L642.6 139.6Z"/><path color="#85899b" d="M683.3 111.1L688.5 111.1L684.1 115.3L678.8 115.3Z"/><path color="#7e8395" d="M505.6 246L509.7 245.2L491.8 262.7L487.9 263.6Z"/><path color="#575a66" d="M393.3 356.5L394.9 354.8L377.6 372.6L376.3 374.5Z"/><path color="#84899b" d="M663 125.3L668.3 125.3L660.9 132.4L655.5 132.4Z"/><path color="#7d8193" d="M466.9 282.3L470.2 281.2L452.6 298.8L449.4 300Z"/><path color="#85899b" d="M678.8 115.3L684.1 115.3L679.6 119.6L674.3 119.6Z"/><path color="#7b7f91" d="M429.3 319.1L431.9 317.7L414.4 335.4L412.1 337Z"/><path color="#7f8496" d="M527.5 227.7L532 227.1L514 244.5L509.7 245.2Z"/><path color="#84889a" d="M642.6 139.6L648 139.6L630 156.6L624.6 156.8Z"/><path color="#85899b" d="M674.3 119.6L679.6 119.6L673.7 125.3L668.3 125.3Z"/><path color="#808597" d="M549.9 209.7L554.8 209.2L536.7 226.6L532 227.1Z"/><path color="#84899b" d="M655.5 132.4L660.9 132.4L653.4 139.5L648 139.6Z"/><path color="#575a66" d="M376.3 374.5L377.6 372.6L360.4 390.4L359.4 392.5Z"/><path color="#83879a" d="M619.2 156.9L624.6 156.8L606.5 173.9L601.2 174.1Z"/><path color="#818598" d="M572.8 191.9L577.8 191.6L559.8 208.8L554.8 209.2Z"/><path color="#85899b" d="M688.5 111.1L693.8 111.1L689.4 115.3L684.1 115.3Z"/><path color="#7e8294" d="M487.9 263.6L491.8 262.7L474 280.2L470.2 281.2Z"/><path color="#828699" d="M595.9 174.3L601.2 174.1L583.1 191.3L577.8 191.6Z"/><path color="#7a7f90" d="M412.1 337L414.4 335.4L396.9 353.1L394.9 354.8Z"/><path color="#7c8092" d="M449.4 300L452.6 298.8L434.9 316.4L431.9 317.7Z"/><path color="#84899b" d="M668.3 125.3L673.7 125.3L666.3 132.4L660.9 132.4Z"/><path color="#85899b" d="M684.1 115.3L689.4 115.3L685 119.6L679.6 119.6Z"/><path color="#7f8395" d="M509.7 245.2L514 244.5L496.1 261.9L491.8 262.7Z"/><path color="#575a66" d="M359.4 392.5L360.4 390.4L343.1 408.3L342.4 410.4Z"/><path color="#85899b" d="M679.6 119.6L685 119.6L679.1 125.3L673.7 125.3Z"/><path color="#84889b" d="M648 139.6L653.4 139.5L635.5 156.6L630 156.6Z"/><path color="#808496" d="M532 227.1L536.7 226.6L518.7 243.9L514 244.5Z"/><path color="#84899b" d="M660.9 132.4L666.3 132.4L658.9 139.5L653.4 139.5Z"/><path color="#85899b" d="M693.8 111.1L699.1 111.1L694.7 115.3L689.4 115.3Z"/><path color="#7d8294" d="M470.2 281.2L474 280.2L456.2 297.7L452.6 298.8Z"/><path color="#7a7e8f" d="M394.9 354.8L396.9 353.1L379.5 370.8L377.6 372.6Z"/><path color="#83889a" d="M624.6 156.8L630 156.6L612 173.7L606.5 173.9Z"/><path color="#818597" d="M554.8 209.2L559.8 208.8L541.7 226.1L536.7 226.6Z"/><path color="#7c8092" d="M431.9 317.7L434.9 316.4L417.2 334L414.4 335.4Z"/><path color="#828799" d="M601.2 174.1L606.5 173.9L588.5 191L583.1 191.3Z"/><path color="#818698" d="M577.8 191.6L583.1 191.3L565 208.4L559.8 208.8Z"/><path color="#85899b" d="M673.7 125.3L679.1 125.3L671.8 132.3L666.3 132.4Z"/><path color="#85899b" d="M689.4 115.3L694.7 115.3L690.4 119.6L685 119.6Z"/><path color="#7e8395" d="M491.8 262.7L496.1 261.9L478.1 279.3L474 280.2Z"/><path color="#85899b" d="M685 119.6L690.4 119.6L684.5 125.2L679.1 125.3Z"/><path color="#84899b" d="M653.4 139.5L658.9 139.5L641.1 156.5L635.5 156.6Z"/><path color="#575a66" d="M377.6 372.6L379.5 370.8L362 388.6L360.4 390.4Z"/><path color="#85899b" d="M666.3 132.4L671.8 132.3L664.4 139.4L658.9 139.5Z"/><path color="#85899b" d="M699.1 111.1L704.3 111.1L700 115.3L694.7 115.3Z"/><path color="#7d8193" d="M452.6 298.8L456.2 297.7L438.4 315.2L434.9 316.4Z"/><path color="#7f8496" d="M514 244.5L518.7 243.9L500.7 261.2L496.1 261.9Z"/><path color="#7b7f91" d="M414.4 335.4L417.2 334L399.5 351.6L396.9 353.1Z"/><path color="#84889a" d="M630 156.6L635.5 156.6L617.6 173.6L612 173.7Z"/><path color="#808597" d="M536.7 226.6L541.7 226.1L523.6 243.3L518.7 243.9Z"/><path color="#85899c" d="M694.7 115.3L700 115.3L695.7 119.6L690.4 119.6Z"/><path color="#85899b" d="M679.1 125.3L684.5 125.2L677.3 132.3L671.8 132.3Z"/><path color="#838799" d="M606.5 173.9L612 173.7L594 190.8L588.5 191Z"/><path color="#818598" d="M559.8 208.8L565 208.4L546.9 225.6L541.7 226.1Z"/><path color="#828699" d="M583.1 191.3L588.5 191L570.4 208.1L565 208.4Z"/><path color="#7e8294" d="M474 280.2L478.1 279.3L460.2 296.7L456.2 297.7Z"/><path color="#85899c" d="M690.4 119.6L695.7 119.6L690 125.3L684.5 125.2Z"/><path color="#575a66" d="M360.4 390.4L362 388.6L344.5 406.3L343.1 408.3Z"/><path color="#85899c" d="M704.3 111.1L709.6 111.1L705.4 115.3L700 115.3Z"/><path color="#7c8193" d="M434.9 316.4L438.4 315.2L420.5 332.7L417.2 334Z"/><path color="#85899b" d="M671.8 132.3L677.3 132.3L670 139.4L664.4 139.4Z"/><path color="#84899b" d="M658.9 139.5L664.4 139.4L646.8 156.5L641.1 156.5Z"/><path color="#7b7f91" d="M396.9 353.1L399.5 351.6L381.9 369.2L379.5 370.8Z"/><path color="#7f8395" d="M496.1 261.9L500.7 261.2L482.6 278.5L478.1 279.3Z"/><path color="#85899c" d="M700 115.3L705.4 115.3L701.1 119.6L695.7 119.6Z"/><path color="#84889b" d="M635.5 156.6L641.1 156.5L623.4 173.5L617.6 173.6Z"/><path color="#85899c" d="M684.5 125.2L690 125.3L682.8 132.3L677.3 132.3Z"/><path color="#808496" d="M518.7 243.9L523.6 243.3L505.6 260.5L500.7 261.2Z"/><path color="#83889a" d="M612 173.7L617.6 173.6L599.7 190.7L594 190.8Z"/><path color="#7e8294" d="M456.2 297.7L460.2 296.7L442.3 314.1L438.4 315.2Z"/><path color="#818597" d="M541.7 226.1L546.9 225.6L528.8 242.8L523.6 243.3Z"/><path color="#828799" d="M588.5 191L594 190.8L576.1 207.9L570.4 208.1Z"/><path color="#858a9c" d="M695.7 119.6L701.1 119.6L695.5 125.3L690 125.3Z"/><path color="#828698" d="M565 208.4L570.4 208.1L552.4 225.3L546.9 225.6Z"/><path color="#85899c" d="M709.6 111.1L714.9 111L710.7 115.3L705.4 115.3Z"/><path color="#7a7f90" d="M379.5 370.8L381.9 369.2L364.2 386.8L362 388.6Z"/><path color="#7c8092" d="M417.2 334L420.5 332.7L402.7 350.2L399.5 351.6Z"/><path color="#85899c" d="M677.3 132.3L682.8 132.3L675.6 139.4L670 139.4Z"/><path color="#85899b" d="M664.4 139.4L670 139.4L652.6 156.5L646.8 156.5Z"/><path color="#7f8395" d="M478.1 279.3L482.6 278.5L464.6 295.8L460.2 296.7Z"/><path color="#858a9c" d="M705.4 115.3L710.7 115.3L706.5 119.6L701.1 119.6Z"/><path color="#858a9c" d="M690 125.3L695.5 125.3L688.4 132.4L682.8 132.3Z"/><path color="#84899b" d="M641.1 156.5L646.8 156.5L629.2 173.5L623.4 173.5Z"/><path color="#808496" d="M500.7 261.2L505.6 260.5L487.5 277.8L482.6 278.5Z"/><path color="#7d8294" d="M438.4 315.2L442.3 314.1L424.3 331.5L420.5 332.7Z"/><path color="#858a9c" d="M701.1 119.6L706.5 119.6L700.9 125.3L695.5 125.3Z"/><path color="#84889a" d="M617.6 173.6L623.4 173.5L605.6 190.6L599.7 190.7Z"/><path color="#7a7e90" d="M362 388.6L364.2 386.8L346.5 404.4L344.5 406.3Z"/><path color="#858a9c" d="M714.9 111L720.1 111L716 115.3L710.7 115.3Z"/><path color="#7c8092" d="M399.5 351.6L402.7 350.2L384.9 367.7L381.9 369.2Z"/><path color="#808597" d="M523.6 243.3L528.8 242.8L510.8 260L505.6 260.5Z"/><path color="#83879a" d="M594 190.8L599.7 190.7L581.9 207.7L576.1 207.9Z"/><path color="#858a9c" d="M682.8 132.3L688.4 132.4L681.3 139.5L675.6 139.4Z"/><path color="#818698" d="M546.9 225.6L552.4 225.3L534.3 242.4L528.8 242.8Z"/><path color="#858a9c" d="M670 139.4L675.6 139.4L658.4 156.5L652.6 156.5Z"/><path color="#828799" d="M570.4 208.1L576.1 207.9L558.1 225L552.4 225.3Z"/><path color="#858a9c" d="M710.7 115.3L716 115.3L711.9 119.6L706.5 119.6Z"/><path color="#7e8395" d="M460.2 296.7L464.6 295.8L446.6 313.1L442.3 314.1Z"/><path color="#858a9c" d="M695.5 125.3L700.9 125.3L694 132.4L688.4 132.4Z"/><path color="#85899b" d="M646.8 156.5L652.6 156.5L635.2 173.5L629.2 173.5Z"/><path color="#858a9c" d="M706.5 119.6L711.9 119.6L706.4 125.3L700.9 125.3Z"/><path color="#7d8193" d="M420.5 332.7L424.3 331.5L406.4 348.9L402.7 350.2Z"/><path color="#7f8496" d="M482.6 278.5L487.5 277.8L469.4 295L464.6 295.8Z"/><path color="#858a9c" d="M720.1 111L725.4 111L721.4 115.3L716 115.3Z"/><path color="#7b8091" d="M381.9 369.2L384.9 367.7L367 385.2L364.2 386.8Z"/><path color="#84899b" d="M623.4 173.5L629.2 173.5L611.6 190.5L605.6 190.6Z"/><path color="#868a9c" d="M688.4 132.4L694 132.4L687 139.5L681.3 139.5Z"/><path color="#868a9c" d="M675.6 139.4L681.3 139.5L664.3 156.5L658.4 156.5Z"/><path color="#808597" d="M505.6 260.5L510.8 260L492.7 277.2L487.5 277.8Z"/><path color="#83889a" d="M599.7 190.7L605.6 190.6L587.8 207.6L581.9 207.7Z"/><path color="#868a9c" d="M716 115.3L721.4 115.3L717.3 119.6L711.9 119.6Z"/><path color="#868a9c" d="M700.9 125.3L706.4 125.3L699.6 132.5L694 132.4Z"/><path color="#818598" d="M528.8 242.8L534.3 242.4L516.3 259.5L510.8 260Z"/><path color="#838799" d="M576.1 207.9L581.9 207.7L564 224.8L558.1 225Z"/><path color="#828699" d="M552.4 225.3L558.1 225L540.1 242.1L534.3 242.4Z"/><path color="#7e8294" d="M442.3 314.1L446.6 313.1L428.6 330.5L424.3 331.5Z"/><path color="#858a9c" d="M652.6 156.5L658.4 156.5L641.2 173.5L635.2 173.5Z"/><path color="#868a9c" d="M711.9 119.6L717.3 119.6L712 125.4L706.4 125.3Z"/><path color="#7d8193" d="M402.7 350.2L406.4 348.9L388.4 366.3L384.9 367.7Z"/><path color="#868a9c" d="M725.4 111L730.7 111L726.7 115.3L721.4 115.3Z"/><path color="#7b7f91" d="M364.2 386.8L367 385.2L349.2 402.7L346.5 404.4Z"/><path color="#7f8395" d="M464.6 295.8L469.4 295L451.4 312.3L446.6 313.1Z"/><path color="#868b9d" d="M694 132.4L699.6 132.5L692.7 139.6L687 139.5Z"/><path color="#85899b" d="M629.2 173.5L635.2 173.5L617.7 190.5L611.6 190.5Z"/><path color="#868a9d" d="M681.3 139.5L687 139.5L670.3 156.6L664.3 156.5Z"/><path color="#868a9c" d="M721.4 115.3L726.7 115.3L722.8 119.7L717.3 119.6Z"/><path color="#868b9d" d="M706.4 125.3L712 125.4L705.2 132.5L699.6 132.5Z"/><path color="#84899b" d="M605.6 190.6L611.6 190.5L594 207.5L587.8 207.6Z"/><path color="#808496" d="M487.5 277.8L492.7 277.2L474.6 294.4L469.4 295Z"/><path color="#7e8294" d="M424.3 331.5L428.6 330.5L410.5 347.8L406.4 348.9Z"/><path color="#83889a" d="M581.9 207.7L587.8 207.6L570.1 224.6L564 224.8Z"/><path color="#818597" d="M510.8 260L516.3 259.5L498.2 276.7L492.7 277.2Z"/><path color="#868a9d" d="M658.4 156.5L664.3 156.5L647.3 173.6L641.2 173.5Z"/><path color="#868b9d" d="M717.3 119.6L722.8 119.7L717.5 125.4L712 125.4Z"/><path color="#828799" d="M558.1 225L564 224.8L546.1 241.8L540.1 242.1Z"/><path color="#828698" d="M534.3 242.4L540.1 242.1L522.1 259.2L516.3 259.5Z"/><path color="#868a9d" d="M730.7 111L736 111L732.1 115.4L726.7 115.3Z"/><path color="#7c8192" d="M384.9 367.7L388.4 366.3L370.5 383.7L367 385.2Z"/><path color="#878b9d" d="M699.6 132.5L705.2 132.5L698.5 139.7L692.7 139.6Z"/><path color="#878b9d" d="M687 139.5L692.7 139.6L676.3 156.7L670.3 156.6Z"/><path color="#858a9c" d="M635.2 173.5L641.2 173.5L624 190.5L617.7 190.5Z"/><path color="#7f8395" d="M446.6 313.1L451.4 312.3L433.3 329.5L428.6 330.5Z"/><path color="#868b9d" d="M726.7 115.3L732.1 115.4L728.2 119.7L722.8 119.7Z"/><path color="#878b9d" d="M712 125.4L717.5 125.4L710.9 132.6L705.2 132.5Z"/><path color="#85899b" d="M611.6 190.5L617.7 190.5L600.3 207.5L594 207.5Z"/><path color="#808496" d="M469.4 295L474.6 294.4L456.5 311.5L451.4 312.3Z"/><path color="#7d8294" d="M406.4 348.9L410.5 347.8L392.5 365.1L388.4 366.3Z"/><path color="#878b9d" d="M722.8 119.7L728.2 119.7L723.1 125.5L717.5 125.4Z"/><path color="#878b9d" d="M664.3 156.5L670.3 156.6L653.6 173.7L647.3 173.6Z"/><path color="#868b9d" d="M736 111L741.2 111L737.4 115.4L732.1 115.4Z"/><path color="#84889b" d="M587.8 207.6L594 207.5L576.4 224.5L570.1 224.6Z"/><path color="#7c8092" d="M367 385.2L370.5 383.7L352.5 401.1L349.2 402.7Z"/><path color="#808597" d="M492.7 277.2L498.2 276.7L480.2 293.8L474.6 294.4Z"/><path color="#878c9e" d="M705.2 132.5L710.9 132.6L704.3 139.8L698.5 139.7Z"/><path color="#83889a" d="M564 224.8L570.1 224.6L552.3 241.6L546.1 241.8Z"/><path color="#818698" d="M516.3 259.5L522.1 259.2L504.1 276.2L498.2 276.7Z"/><path color="#828799" d="M540.1 242.1L546.1 241.8L528.2 258.9L522.1 259.2Z"/><path color="#878c9e" d="M692.7 139.6L698.5 139.7L682.4 156.9L676.3 156.7Z"/><path color="#878b9d" d="M732.1 115.4L737.4 115.4L733.7 119.7L728.2 119.7Z"/><path color="#868b9d" d="M641.2 173.5L647.3 173.6L630.4 190.6L624 190.5Z"/><path color="#878c9e" d="M717.5 125.4L723.1 125.5L716.6 132.7L710.9 132.6Z"/><path color="#7e8395" d="M428.6 330.5L433.3 329.5L415.2 346.8L410.5 347.8Z"/><path color="#878c9e" d="M728.2 119.7L733.7 119.7L728.6 125.5L723.1 125.5Z"/><path color="#868a9c" d="M617.7 190.5L624 190.5L606.8 207.6L600.3 207.5Z"/><path color="#878c9e" d="M670.3 156.6L676.3 156.7L659.9 173.9L653.6 173.7Z"/><path color="#878c9e" d="M741.2 111L746.5 111L742.8 115.4L737.4 115.4Z"/><path color="#7d8193" d="M388.4 366.3L392.5 365.1L374.5 382.4L370.5 383.7Z"/><path color="#7f8496" d="M451.4 312.3L456.5 311.5L438.5 328.7L433.3 329.5Z"/><path color="#888c9f" d="M710.9 132.6L716.6 132.7L710.1 139.9L704.3 139.8Z"/><path color="#85899b" d="M594 207.5L600.3 207.5L582.9 224.5L576.4 224.5Z"/><path color="#888d9f" d="M698.5 139.7L704.3 139.8L688.5 157L682.4 156.9Z"/><path color="#888c9e" d="M737.4 115.4L742.8 115.4L739.1 119.8L733.7 119.7Z"/><path color="#808597" d="M474.6 294.4L480.2 293.8L462.1 310.9L456.5 311.5Z"/><path color="#888d9f" d="M723.1 125.5L728.6 125.5L722.3 132.8L716.6 132.7Z"/><path color="#878c9e" d="M647.3 173.6L653.6 173.7L636.8 190.8L630.4 190.6Z"/><path color="#84889b" d="M570.1 224.6L576.4 224.5L558.8 241.6L552.3 241.6Z"/><path color="#818698" d="M498.2 276.7L504.1 276.2L486.1 293.3L480.2 293.8Z"/><path color="#83879a" d="M546.1 241.8L552.3 241.6L534.5 258.7L528.2 258.9Z"/><path color="#7e8395" d="M410.5 347.8L415.2 346.8L397.1 364L392.5 365.1Z"/><path color="#828699" d="M522.1 259.2L528.2 258.9L510.3 275.9L504.1 276.2Z"/><path color="#888d9f" d="M733.7 119.7L739.1 119.8L734.2 125.6L728.6 125.5Z"/><path color="#888d9f" d="M746.5 111L751.8 111L748.2 115.4L742.8 115.4Z"/><path color="#888d9f" d="M676.3 156.7L682.4 156.9L666.2 174L659.9 173.9Z"/><path color="#878b9d" d="M624 190.5L630.4 190.6L613.4 207.7L606.8 207.6Z"/><path color="#7d8193" d="M370.5 383.7L374.5 382.4L356.5 399.7L352.5 401.1Z"/><path color="#898d9f" d="M716.6 132.7L722.3 132.8L716 140L710.1 139.9Z"/><path color="#7f8496" d="M433.3 329.5L438.5 328.7L420.4 345.9L415.2 346.8Z"/><path color="#898ea0" d="M704.3 139.8L710.1 139.9L694.7 157.2L688.5 157Z"/><path color="#898d9f" d="M742.8 115.4L748.2 115.4L744.6 119.8L739.1 119.8Z"/><path color="#898ea0" d="M728.6 125.5L734.2 125.6L728 132.9L722.3 132.8Z"/><path color="#868a9c" d="M600.3 207.5L606.8 207.6L589.5 224.6L582.9 224.5Z"/><path color="#888d9f" d="M653.6 173.7L659.9 173.9L643.4 191L636.8 190.8Z"/><path color="#808497" d="M456.5 311.5L462.1 310.9L444.1 328L438.5 328.7Z"/><path color="#85899b" d="M576.4 224.5L582.9 224.5L565.4 241.6L558.8 241.6Z"/><path color="#8a8ea0" d="M739.1 119.8L744.6 119.8L739.8 125.7L734.2 125.6Z"/><path color="#7e8294" d="M392.5 365.1L397.1 364L379.1 381.3L374.5 382.4Z"/><path color="#898ea0" d="M751.8 111L757 111L753.5 115.4L748.2 115.4Z"/><path color="#8a8ea0" d="M682.4 156.9L688.5 157L672.7 174.3L666.2 174Z"/><path color="#818598" d="M480.2 293.8L486.1 293.3L468.1 310.4L462.1 310.9Z"/><path color="#84889b" d="M552.3 241.6L558.8 241.6L541.1 258.6L534.5 258.7Z"/><path color="#8a8fa1" d="M722.3 132.8L728 132.9L721.9 140.2L716 140Z"/><path color="#888c9e" d="M630.4 190.6L636.8 190.8L620.1 207.9L613.4 207.7Z"/><path color="#828699" d="M504.1 276.2L510.3 275.9L492.4 293L486.1 293.3Z"/><path color="#83879a" d="M528.2 258.9L534.5 258.7L516.8 275.7L510.3 275.9Z"/><path color="#8a8fa1" d="M710.1 139.9L716 140L700.9 157.4L694.7 157.2Z"/><path color="#8a8fa1" d="M748.2 115.4L753.5 115.4L750 119.9L744.6 119.8Z"/><path color="#8b8fa1" d="M734.2 125.6L739.8 125.7L733.8 133L728 132.9Z"/><path color="#7f8395" d="M415.2 346.8L420.4 345.9L402.3 363.1L397.1 364Z"/><path color="#898ea0" d="M659.9 173.9L666.2 174L650.1 191.2L643.4 191Z"/><path color="#878b9d" d="M606.8 207.6L613.4 207.7L596.4 224.7L589.5 224.6Z"/><path color="#8b90a2" d="M744.6 119.8L750 119.9L745.3 125.8L739.8 125.7Z"/><path color="#8b90a2" d="M757 111L762.3 111L758.9 115.5L753.5 115.4Z"/><path color="#8b8fa1" d="M688.5 157L694.7 157.2L679.2 174.5L672.7 174.3Z"/><path color="#868a9d" d="M582.9 224.5L589.5 224.6L572.3 241.6L565.4 241.6Z"/><path color="#808496" d="M438.5 328.7L444.1 328L426 345.2L420.4 345.9Z"/><path color="#8c90a2" d="M728 132.9L733.8 133L727.8 140.4L721.9 140.2Z"/><path color="#7e8294" d="M374.5 382.4L379.1 381.3L361 398.5L356.5 399.7Z"/><path color="#898d9f" d="M636.8 190.8L643.4 191L627 208.1L620.1 207.9Z"/><path color="#8c90a2" d="M716 140L721.9 140.2L707.1 157.7L700.9 157.4Z"/><path color="#85899b" d="M558.8 241.6L565.4 241.6L548 258.6L541.1 258.6Z"/><path color="#8c91a3" d="M753.5 115.4L758.9 115.5L755.5 119.9L750 119.9Z"/><path color="#818597" d="M462.1 310.9L468.1 310.4L450.1 327.5L444.1 328Z"/><path color="#8d91a3" d="M739.8 125.7L745.3 125.8L739.5 133.2L733.8 133Z"/><path color="#84889a" d="M534.5 258.7L541.1 258.6L523.5 275.6L516.8 275.7Z"/><path color="#828698" d="M486.1 293.3L492.4 293L474.5 310L468.1 310.4Z"/><path color="#838799" d="M510.3 275.9L516.8 275.7L499 292.7L492.4 293Z"/><path color="#8b8fa1" d="M666.2 174L672.7 174.3L656.9 191.5L650.1 191.2Z"/><path color="#888d9f" d="M613.4 207.7L620.1 207.9L603.4 225L596.4 224.7Z"/><path color="#8e92a4" d="M750 119.9L755.5 119.9L750.9 125.9L745.3 125.8Z"/><path color="#7f8395" d="M397.1 364L402.3 363.1L384.2 380.3L379.1 381.3Z"/><path color="#8d91a3" d="M694.7 157.2L700.9 157.4L685.7 174.8L679.2 174.5Z"/><path color="#8e92a4" d="M762.3 111L767.6 111L764.3 115.5L758.9 115.5Z"/><path color="#8e92a4" d="M733.8 133L739.5 133.2L733.7 140.5L727.8 140.4Z"/><path color="#878c9e" d="M589.5 224.6L596.4 224.7L579.4 241.8L572.3 241.6Z"/><path color="#8e92a4" d="M721.9 140.2L727.8 140.4L713.3 158L707.1 157.7Z"/><path color="#8b8fa1" d="M643.4 191L650.1 191.2L634 208.4L627 208.1Z"/><path color="#8f94a5" d="M758.9 115.5L764.3 115.5L760.9 120L755.5 119.9Z"/><path color="#808496" d="M420.4 345.9L426 345.2L408 362.3L402.3 363.1Z"/><path color="#8f93a5" d="M745.3 125.8L750.9 125.9L745.2 133.3L739.5 133.2Z"/><path color="#868a9d" d="M565.4 241.6L572.3 241.6L555.1 258.7L548 258.6Z"/><path color="#8d91a3" d="M672.7 174.3L679.2 174.5L663.7 191.9L656.9 191.5Z"/><path color="#818597" d="M444.1 328L450.1 327.5L432.1 344.6L426 345.2Z"/><path color="#9195a7" d="M755.5 119.9L760.9 120L756.5 126L750.9 125.9Z"/><path color="#8a8ea0" d="M620.1 207.9L627 208.1L610.5 225.2L603.4 225Z"/><path color="#85899b" d="M541.1 258.6L548 258.6L530.6 275.6L523.5 275.6Z"/><path color="#8e93a5" d="M700.9 157.4L707.1 157.7L692.3 175.2L685.7 174.8Z"/><path color="#828698" d="M468.1 310.4L474.5 310L456.6 327.1L450.1 327.5Z"/><path color="#9095a6" d="M739.5 133.2L745.2 133.3L739.6 140.7L733.7 140.5Z"/><path color="#84889a" d="M516.8 275.7L523.5 275.6L505.9 292.6L499 292.7Z"/><path color="#7f8395" d="M379.1 381.3L384.2 380.3L366.1 397.4L361 398.5Z"/><path color="#838799" d="M492.4 293L499 292.7L481.2 309.8L474.5 310Z"/><path color="#9094a6" d="M727.8 140.4L733.7 140.5L719.6 158.3L713.3 158Z"/><path color="#8c91a3" d="M650.1 191.2L656.9 191.5L641 208.8L634 208.4Z"/><path color="#9297a8" d="M750.9 125.9L756.5 126L751 133.5L745.2 133.3Z"/><path color="#898d9f" d="M596.4 224.7L603.4 225L586.7 242L579.4 241.8Z"/><path color="#8f93a5" d="M679.2 174.5L685.7 174.8L670.6 192.3L663.7 191.9Z"/><path color="#808496" d="M402.3 363.1L408 362.3L389.9 379.4L384.2 380.3Z"/><path color="#878c9e" d="M572.3 241.6L579.4 241.8L562.4 258.9L555.1 258.7Z"/><path color="#9195a7" d="M707.1 157.7L713.3 158L698.9 175.6L692.3 175.2Z"/><path color="#8c90a2" d="M627 208.1L634 208.4L617.8 225.6L610.5 225.2Z"/><path color="#9498a9" d="M745.2 133.3L751 133.5L745.5 140.9L739.6 140.7Z"/><path color="#9397a8" d="M733.7 140.5L739.6 140.7L725.9 158.6L719.6 158.3Z"/><path color="#808597" d="M426 345.2L432.1 344.6L414.2 361.7L408 362.3Z"/><path color="#868b9d" d="M548 258.6L555.1 258.7L537.9 275.7L530.6 275.6Z"/><path color="#8f93a5" d="M656.9 191.5L663.7 191.9L648.2 209.2L641 208.8Z"/><path color="#818698" d="M450.1 327.5L456.6 327.1L438.7 344.1L432.1 344.6Z"/><path color="#85899b" d="M523.5 275.6L530.6 275.6L513.1 292.6L505.9 292.6Z"/><path color="#8b8fa1" d="M603.4 225L610.5 225.2L594.1 242.4L586.7 242Z"/><path color="#9196a7" d="M685.7 174.8L692.3 175.2L677.5 192.7L670.6 192.3Z"/><path color="#828799" d="M474.5 310L481.2 309.8L463.5 326.8L456.6 327.1Z"/><path color="#84889a" d="M499 292.7L505.9 292.6L488.3 309.6L481.2 309.8Z"/><path color="#9397a9" d="M713.3 158L719.6 158.3L705.6 176L698.9 175.6Z"/><path color="#8e92a4" d="M634 208.4L641 208.8L625.2 226L617.8 225.6Z"/><path color="#7f8496" d="M384.2 380.3L389.9 379.4L371.9 396.5L366.1 397.4Z"/><path color="#959aab" d="M739.6 140.7L745.5 140.9L732.2 158.9L725.9 158.6Z"/><path color="#898ea0" d="M579.4 241.8L586.7 242L569.9 259.1L562.4 258.9Z"/><path color="#9196a7" d="M663.7 191.9L670.6 192.3L655.4 209.7L648.2 209.2Z"/><path color="#888c9e" d="M555.1 258.7L562.4 258.9L545.4 275.9L537.9 275.7Z"/><path color="#9498aa" d="M692.3 175.2L698.9 175.6L684.5 193.2L677.5 192.7Z"/><path color="#808597" d="M408 362.3L414.2 361.7L396.2 378.7L389.9 379.4Z"/><path color="#8d91a3" d="M610.5 225.2L617.8 225.6L601.7 242.8L594.1 242.4Z"/><path color="#959aab" d="M719.6 158.3L725.9 158.6L712.3 176.4L705.6 176Z"/><path color="#868b9d" d="M530.6 275.6L537.9 275.7L520.7 292.7L513.1 292.6Z"/><path color="#818698" d="M432.1 344.6L438.7 344.1L420.8 361.2L414.2 361.7Z"/><path color="#9195a7" d="M641 208.8L648.2 209.2L632.7 226.5L625.2 226Z"/><path color="#85899c" d="M505.9 292.6L513.1 292.6L495.7 309.6L488.3 309.6Z"/><path color="#828799" d="M456.6 327.1L463.5 326.8L445.7 343.8L438.7 344.1Z"/><path color="#84889a" d="M481.2 309.8L488.3 309.6L470.7 326.7L463.5 326.8Z"/><path color="#8b90a2" d="M586.7 242L594.1 242.4L577.7 259.5L569.9 259.1Z"/><path color="#9498aa" d="M670.6 192.3L677.5 192.7L662.8 210.2L655.4 209.7Z"/><path color="#969bac" d="M698.9 175.6L705.6 176L691.6 193.7L684.5 193.2Z"/><path color="#979cad" d="M725.9 158.6L732.2 158.9L719 176.9L712.3 176.4Z"/><path color="#9094a6" d="M617.8 225.6L625.2 226L609.4 243.3L601.7 242.8Z"/><path color="#8a8ea0" d="M562.4 258.9L569.9 259.1L553.2 276.2L545.4 275.9Z"/><path color="#808597" d="M389.9 379.4L396.2 378.7L378.2 395.8L371.9 396.5Z"/><path color="#9498aa" d="M648.2 209.2L655.4 209.7L640.3 227.1L632.7 226.5Z"/><path color="#888c9f" d="M537.9 275.7L545.4 275.9L528.5 293L520.7 292.7Z"/><path color="#979bad" d="M677.5 192.7L684.5 193.2L670.1 210.8L662.8 210.2Z"/><path color="#989dae" d="M705.6 176L712.3 176.4L698.6 194.2L691.6 193.7Z"/><path color="#8e92a4" d="M594.1 242.4L601.7 242.8L585.5 260L577.7 259.5Z"/><path color="#818698" d="M414.2 361.7L420.8 361.2L402.9 378.2L396.2 378.7Z"/><path color="#868b9d" d="M513.1 292.6L520.7 292.7L503.5 309.8L495.7 309.6Z"/><path color="#828799" d="M438.7 344.1L445.7 343.8L427.9 360.9L420.8 361.2Z"/><path color="#85899c" d="M488.3 309.6L495.7 309.6L478.3 326.7L470.7 326.7Z"/><path color="#83889a" d="M463.5 326.8L470.7 326.7L453.1 343.7L445.7 343.8Z"/><path color="#9397a9" d="M625.2 226L632.7 226.5L617.2 243.8L609.4 243.3Z"/><path color="#8c91a3" d="M569.9 259.1L577.7 259.5L561.2 276.6L553.2 276.2Z"/><path color="#979bad" d="M655.4 209.7L662.8 210.2L648 227.7L640.3 227.1Z"/><path color="#999eaf" d="M684.5 193.2L691.6 193.7L677.5 211.4L670.1 210.8Z"/><path color="#9a9fb0" d="M712.3 176.4L719 176.9L705.7 194.8L698.6 194.2Z"/><path color="#9196a7" d="M601.7 242.8L609.4 243.3L593.6 260.5L585.5 260Z"/><path color="#8a8fa1" d="M545.4 275.9L553.2 276.2L536.5 293.3L528.5 293Z"/><path color="#969bac" d="M632.7 226.5L640.3 227.1L625.2 244.5L617.2 243.8Z"/><path color="#888d9f" d="M520.7 292.7L528.5 293L511.5 310L503.5 309.8Z"/><path color="#9a9eaf" d="M662.8 210.2L670.1 210.8L655.7 228.4L648 227.7Z"/><path color="#818698" d="M396.2 378.7L402.9 378.2L385 395.3L378.2 395.8Z"/><path color="#9ca0b1" d="M691.6 193.7L698.6 194.2L685 212.1L677.5 211.4Z"/><path color="#8f94a5" d="M577.7 259.5L585.5 260L569.4 277.2L561.2 276.6Z"/><path color="#868b9d" d="M495.7 309.6L503.5 309.8L486.2 326.8L478.3 326.7Z"/><path color="#828799" d="M420.8 361.2L427.9 360.9L410.1 377.9L402.9 378.2Z"/><path color="#85899c" d="M470.7 326.7L478.3 326.7L460.9 343.7L453.1 343.7Z"/><path color="#83889a" d="M445.7 343.8L453.1 343.7L435.5 360.7L427.9 360.9Z"/><path color="#9599ab" d="M609.4 243.3L617.2 243.8L601.7 261.2L593.6 260.5Z"/><path color="#999eaf" d="M640.3 227.1L648 227.7L633.2 245.2L625.2 244.5Z"/><path color="#8d91a3" d="M553.2 276.2L561.2 276.6L544.8 293.8L536.5 293.3Z"/><path color="#9ca1b2" d="M670.1 210.8L677.5 211.4L663.5 229.1L655.7 228.4Z"/><path color="#9da1b2" d="M698.6 194.2L705.7 194.8L692.4 212.8L685 212.1Z"/><path color="#8b8fa1" d="M528.5 293L536.5 293.3L519.8 310.4L511.5 310Z"/><path color="#9397a9" d="M585.5 260L593.6 260.5L577.7 277.8L569.4 277.2Z"/><path color="#989dae" d="M617.2 243.8L625.2 244.5L610 261.9L601.7 261.2Z"/><path color="#9da2b3" d="M677.5 211.4L685 212.1L671.3 229.9L663.5 229.1Z"/><path color="#9ca0b1" d="M648 227.7L655.7 228.4L641.3 246L633.2 245.2Z"/><path color="#898d9f" d="M503.5 309.8L511.5 310L494.5 327.1L486.2 326.8Z"/><path color="#828799" d="M402.9 378.2L410.1 377.9L392.4 394.9L385 395.3Z"/><path color="#878b9d" d="M478.3 326.7L486.2 326.8L469 343.8L460.9 343.7Z"/><path color="#9095a7" d="M561.2 276.6L569.4 277.2L553.3 294.3L544.8 293.8Z"/><path color="#83889a" d="M427.9 360.9L435.5 360.7L417.8 377.7L410.1 377.9Z"/><path color="#85899c" d="M453.1 343.7L460.9 343.7L443.4 360.7L435.5 360.7Z"/><path color="#979bac" d="M593.6 260.5L601.7 261.2L586.3 278.5L577.7 277.8Z"/><path color="#9da2b2" d="M685 212.1L692.4 212.8L679.2 230.8L671.3 229.9Z"/><path color="#9ba0b1" d="M625.2 244.5L633.2 245.2L618.4 262.7L610 261.9Z"/><path color="#9da2b3" d="M655.7 228.4L663.5 229.1L649.5 246.8L641.3 246Z"/><path color="#8e92a4" d="M536.5 293.3L544.8 293.8L528.3 310.9L519.8 310.4Z"/><path color="#8b90a2" d="M511.5 310L519.8 310.4L503.1 327.5L494.5 327.1Z"/><path color="#9499aa" d="M569.4 277.2L577.7 277.8L561.9 295L553.3 294.3Z"/><path color="#9da2b2" d="M663.5 229.1L671.3 229.9L657.7 247.8L649.5 246.8Z"/><path color="#9a9fb0" d="M601.7 261.2L610 261.9L594.9 279.3L586.3 278.5Z"/><path color="#9da2b3" d="M633.2 245.2L641.3 246L626.9 263.6L618.4 262.7Z"/><path color="#898d9f" d="M486.2 326.8L494.5 327.1L477.5 344.1L469 343.8Z"/><path color="#878b9d" d="M460.9 343.7L469 343.8L451.8 360.9L443.4 360.7Z"/><path color="#83889a" d="M410.1 377.9L417.8 377.7L400.2 394.7L392.4 394.9Z"/><path color="#85899c" d="M435.5 360.7L443.4 360.7L426 377.7L417.8 377.7Z"/><path color="#9296a8" d="M544.8 293.8L553.3 294.3L537.1 311.5L528.3 310.9Z"/><path color="#9b9fb0" d="M671.3 229.9L679.2 230.8L665.9 248.7L657.7 247.8Z"/><path color="#989dae" d="M577.7 277.8L586.3 278.5L570.8 295.8L561.9 295Z"/><path color="#9da2b2" d="M641.3 246L649.5 246.8L635.5 264.5L626.9 263.6Z"/><path color="#9da1b2" d="M610 261.9L618.4 262.7L603.7 280.2L594.9 279.3Z"/><path color="#8f93a5" d="M519.8 310.4L528.3 310.9L511.9 328L503.1 327.5Z"/><path color="#8c90a2" d="M494.5 327.1L503.1 327.5L486.3 344.6L477.5 344.1Z"/><path color="#969aac" d="M553.3 294.3L561.9 295L546.1 312.3L537.1 311.5Z"/><path color="#9b9fb0" d="M649.5 246.8L657.7 247.8L644 265.6L635.5 264.5Z"/><path color="#9ba0b1" d="M586.3 278.5L594.9 279.3L579.8 296.7L570.8 295.8Z"/><path color="#9da1b2" d="M618.4 262.7L626.9 263.6L612.5 281.2L603.7 280.2Z"/><path color="#898ea0" d="M469 343.8L477.5 344.1L460.5 361.2L451.8 360.9Z"/><path color="#878b9d" d="M443.4 360.7L451.8 360.9L434.6 377.9L426 377.7Z"/><path color="#85899c" d="M417.8 377.7L426 377.7L408.6 394.8L400.2 394.7Z"/><path color="#9397a9" d="M528.3 310.9L537.1 311.5L521 328.7L511.9 328Z"/><path color="#979bac" d="M657.7 247.8L665.9 248.7L652.7 266.7L644 265.6Z"/><path color="#9ba0b0" d="M626.9 263.6L635.5 264.5L621.4 282.3L612.5 281.2Z"/><path color="#9a9eaf" d="M561.9 295L570.8 295.8L555.3 313.1L546.1 312.3Z"/><path color="#9da1b2" d="M594.9 279.3L603.7 280.2L588.9 297.7L579.8 296.7Z"/><path color="#8f94a6" d="M503.1 327.5L511.9 328L495.4 345.2L486.3 344.6Z"/><path color="#8c91a3" d="M477.5 344.1L486.3 344.6L469.6 361.7L460.5 361.2Z"/><path color="#979bac" d="M635.5 264.5L644 265.6L630.4 283.4L621.4 282.3Z"/><path color="#979cad" d="M537.1 311.5L546.1 312.3L530.3 329.5L521 328.7Z"/><path color="#9ca0b1" d="M603.7 280.2L612.5 281.2L598.1 298.8L588.9 297.7Z"/><path color="#898ea0" d="M451.8 360.9L460.5 361.2L443.5 378.2L434.6 377.9Z"/><path color="#9ca1b2" d="M570.8 295.8L579.8 296.7L564.6 314.1L555.3 313.1Z"/><path color="#878b9d" d="M426 377.7L434.6 377.9L417.4 394.9L408.6 394.8Z"/><path color="#9195a6" d="M644 265.6L652.7 266.7L639.4 284.7L630.4 283.4Z"/><path color="#9498aa" d="M511.9 328L521 328.7L504.8 345.9L495.4 345.2Z"/><path color="#989cad" d="M612.5 281.2L621.4 282.3L607.4 300L598.1 298.8Z"/><path color="#9b9fb0" d="M546.1 312.3L555.3 313.1L539.8 330.4L530.3 329.5Z"/><path color="#9ca1b2" d="M579.8 296.7L588.9 297.7L574.1 315.2L564.6 314.1Z"/><path color="#9095a6" d="M486.3 344.6L495.4 345.2L479 362.3L469.6 361.7Z"/><path color="#9297a7" d="M621.4 282.3L630.4 283.4L616.8 301.3L607.4 300Z"/><path color="#8d91a3" d="M460.5 361.2L469.6 361.7L452.9 378.7L443.5 378.2Z"/><path color="#989dae" d="M521 328.7L530.3 329.5L514.5 346.8L504.8 345.9Z"/><path color="#999eaf" d="M588.9 297.7L598.1 298.8L583.7 316.4L574.1 315.2Z"/><path color="#8a8ea0" d="M434.6 377.9L443.5 378.2L426.6 395.3L417.4 394.9Z"/><path color="#9ca1b2" d="M555.3 313.1L564.6 314.1L549.5 331.5L539.8 330.4Z"/><path color="#8c90a1" d="M630.4 283.4L639.4 284.7L626.1 302.6L616.8 301.3Z"/><path color="#9599ab" d="M495.4 345.2L504.8 345.9L488.7 363.1L479 362.3Z"/><path color="#9499a9" d="M598.1 298.8L607.4 300L593.4 317.7L583.7 316.4Z"/><path color="#9ba0b1" d="M530.3 329.5L539.8 330.4L524.3 347.8L514.5 346.8Z"/><path color="#9b9fb0" d="M564.6 314.1L574.1 315.2L559.3 332.7L549.5 331.5Z"/><path color="#9196a7" d="M469.6 361.7L479 362.3L462.6 379.4L452.9 378.7Z"/><path color="#8e92a3" d="M607.4 300L616.8 301.3L603.1 319.1L593.4 317.7Z"/><path color="#8d92a4" d="M443.5 378.2L452.9 378.7L436.2 395.8L426.6 395.3Z"/><path color="#999eaf" d="M504.8 345.9L514.5 346.8L498.6 364L488.7 363.1Z"/><path color="#979bac" d="M574.1 315.2L583.7 316.4L569.3 334L559.3 332.7Z"/><path color="#9ca0b1" d="M539.8 330.4L549.5 331.5L534.4 348.9L524.3 347.8Z"/><path color="#878b9c" d="M616.8 301.3L626.1 302.6L612.9 320.6L603.1 319.1Z"/><path color="#969aac" d="M479 362.3L488.7 363.1L472.6 380.3L462.6 379.4Z"/><path color="#9095a5" d="M583.7 316.4L593.4 317.7L579.3 335.4L569.3 334Z"/><path color="#9ca0b1" d="M514.5 346.8L524.3 347.8L508.8 365.1L498.6 364Z"/><path color="#999eae" d="M549.5 331.5L559.3 332.7L544.6 350.2L534.4 348.9Z"/><path color="#9296a8" d="M452.9 378.7L462.6 379.4L446.1 396.5L436.2 395.8Z"/><path color="#898e9f" d="M593.4 317.7L603.1 319.1L589.5 336.9L579.3 335.4Z"/><path color="#9a9fb0" d="M488.7 363.1L498.6 364L482.8 381.3L472.6 380.3Z"/><path color="#9398a9" d="M559.3 332.7L569.3 334L554.9 351.6L544.6 350.2Z"/><path color="#838798" d="M603.1 319.1L612.9 320.6L599.6 338.6L589.5 336.9Z"/><path color="#9ba0b1" d="M524.3 347.8L534.4 348.9L519.2 366.3L508.8 365.1Z"/><path color="#979bad" d="M462.6 379.4L472.6 380.3L456.4 397.4L446.1 396.5Z"/><path color="#8c91a2" d="M569.3 334L579.3 335.4L565.3 353.1L554.9 351.6Z"/><path color="#979bac" d="M534.4 348.9L544.6 350.2L529.8 367.7L519.2 366.3Z"/><path color="#9ca0b1" d="M498.6 364L508.8 365.1L493.3 382.4L482.8 381.3Z"/><path color="#868a9b" d="M579.3 335.4L589.5 336.9L575.8 354.8L565.3 353.1Z"/><path color="#808495" d="M589.5 336.9L599.6 338.6L586.4 356.5L575.8 354.8Z"/><path color="#9095a6" d="M544.6 350.2L554.9 351.6L540.5 369.2L529.8 367.7Z"/><path color="#9b9fb0" d="M472.6 380.3L482.8 381.3L467 398.5L456.4 397.4Z"/><path color="#9a9eaf" d="M508.8 365.1L519.2 366.3L504.1 383.7L493.3 382.4Z"/><path color="#898d9e" d="M554.9 351.6L565.3 353.1L551.3 370.8L540.5 369.2Z"/><path color="#9599aa" d="M519.2 366.3L529.8 367.7L515 385.2L504.1 383.7Z"/><path color="#9ca0b1" d="M482.8 381.3L493.3 382.4L477.9 399.7L467 398.5Z"/><path color="#838798" d="M565.3 353.1L575.8 354.8L562.2 372.6L551.3 370.8Z"/><path color="#7e8293" d="M575.8 354.8L586.4 356.5L573.1 374.5L562.2 372.6Z"/><path color="#8d92a3" d="M529.8 367.7L540.5 369.2L526.1 386.8L515 385.2Z"/><path color="#999dae" d="M493.3 382.4L504.1 383.7L488.9 401.1L477.9 399.7Z"/><path color="#868a9b" d="M540.5 369.2L551.3 370.8L537.3 388.6L526.1 386.8Z"/><path color="#9296a7" d="M504.1 383.7L515 385.2L500.2 402.7L488.9 401.1Z"/><path color="#808596" d="M551.3 370.8L562.2 372.6L548.5 390.4L537.3 388.6Z"/><path color="#7c8091" d="M562.2 372.6L573.1 374.5L559.8 392.5L548.5 390.4Z"/><path color="#8a8fa0" d="M515 385.2L526.1 386.8L511.7 404.4L500.2 402.7Z"/><path color="#848899" d="M526.1 386.8L537.3 388.6L523.2 406.3L511.7 404.4Z"/><path color="#7e8394" d="M537.3 388.6L548.5 390.4L534.9 408.3L523.2 406.3Z"/><path color="#7a7f8f" d="M548.5 390.4L559.8 392.5L546.6 410.4L534.9 408.3Z"/></g></g>
<!-- ellipse face -->
<polygon points="760.1,491.8 760.1,493.9 759.4,495.9 758.3,497.8 756.5,499.5 754.2,501.2 751.3,502.6 747.9,504.0 743.9,505.2 739.4,506.3 734.4,507.2 728.9,507.9 722.9,508.6 716.5,509.0 709.6,509.3 702.2,509.5 694.4,509.5 686.3,509.3 677.8,509.0 668.9,508.5 659.7,507.9 650.2,507.1 640.4,506.1 630.4,505.1 620.2,503.8 609.8,502.5 599.2,501.0 588.5,499.3 577.7,497.6 566.8,495.7 555.9,493.7 544.9,491.5 534.0,489.3 523.1,487.0 512.3,484.5 501.6,482.0 491.1,479.4 480.7,476.7 470.5,474.0 460.5,471.2 450.8,468.4 441.3,465.5 432.2,462.5 423.3,459.6 414.9,456.6 406.8,453.6 399.1,450.6 391.8,447.6 384.9,444.6 378.5,441.7 372.6,438.8 367.2,435.9 362.3,433.0 357.8,430.2 354.0,427.5 350.6,424.8 347.8,422.3 345.6,419.8 343.9,417.3 342.8,415.0 342.3,412.8 342.3,410.7 343.0,408.7 344.1,406.8 345.9,405.1 348.2,403.4 351.1,402.0 354.5,400.6 358.5,399.4 363.0,398.3 368.0,397.4 373.5,396.7 379.5,396.0 385.9,395.6 392.8,395.3 400.2,395.1 408.0,395.1 416.1,395.3 424.6,395.6 433.5,396.1 442.7,396.7 452.2,397.5 462.0,398.5 472.0,399.5 482.2,400.8 492.6,402.1 503.2,403.6 513.9,405.3 524.7,407.0 535.6,408.9 546.6,410.9 557.5,413.1 568.4,415.3 579.3,417.6 590.1,420.1 600.8,422.6 611.3,425.2 621.7,427.9 631.9,430.6 641.9,433.4 651.6,436.2 661.1,439.1 670.2,442.1 679.1,445.0 687.5,448.0 695.6,451.0 703.3,454.0 710.6,457.0 717.5,460.0 723.9,462.9 729.8,465.8 735.2,468.7 740.1,471.6 744.6,474.4 748.4,477.1 751.8,479.8 754.6,482.3 756.8,484.8 758.5,487.3 759.6,489.6 760.1,491.8" fill="#5f6375"/>
<!-- black edges -->
<g fill="none" stroke="#080808" stroke-width="1.4" stroke-linecap="round">
<polyline points="472.6,111.3 499.3,236.9"/>
<polyline points="347.3,403.2 358.9,391.7 372.7,377.6 386.3,363.6 399.7,349.7 413.0,335.7 426.2,321.9 439.3,308.1 452.0,294.4 464.1,280.8 475.5,267.5 485.6,254.4 494.0,242.0 499.3,236.9"/>
<polyline points="499.3,236.9 515.9,213.1" stroke-width="0.9"/>
<polyline points="767.6,111.0 546.7,411.5"/>
<polyline points="686.2,221.9 687.7,242.3 692.2,272.5 696.8,300.0 702.8,320.0 706.0,333.0 722.5,388.0 742.7,443.4 756.3,482.0 758.5,487.5"/>
</g>
<!-- bottom plane (in front) -->
<polygon points="304.7,358.2 787,449.3 797,546.1 315.4,455" fill="none" stroke="#1a1aff" stroke-width="1.1"/>
<!-- yellow sketch -->
<polygon points="760.1,491.8 760.1,493.9 759.4,495.9 758.3,497.8 756.5,499.5 754.2,501.2 751.3,502.6 747.9,504.0 743.9,505.2 739.4,506.3 734.4,507.2 728.9,507.9 722.9,508.6 716.5,509.0 709.6,509.3 702.2,509.5 694.4,509.5 686.3,509.3 677.8,509.0 668.9,508.5 659.7,507.9 650.2,507.1 640.4,506.1 630.4,505.1 620.2,503.8 609.8,502.5 599.2,501.0 588.5,499.3 577.7,497.6 566.8,495.7 555.9,493.7 544.9,491.5 534.0,489.3 523.1,487.0 512.3,484.5 501.6,482.0 491.1,479.4 480.7,476.7 470.5,474.0 460.5,471.2 450.8,468.4 441.3,465.5 432.2,462.5 423.3,459.6 414.9,456.6 406.8,453.6 399.1,450.6 391.8,447.6 384.9,444.6 378.5,441.7 372.6,438.8 367.2,435.9 362.3,433.0 357.8,430.2 354.0,427.5 350.6,424.8 347.8,422.3 345.6,419.8 343.9,417.3 342.8,415.0 342.3,412.8 342.3,410.7 343.0,408.7 344.1,406.8 345.9,405.1 348.2,403.4 351.1,402.0 354.5,400.6 358.5,399.4 363.0,398.3 368.0,397.4 373.5,396.7 379.5,396.0 385.9,395.6 392.8,395.3 400.2,395.1 408.0,395.1 416.1,395.3 424.6,395.6 433.5,396.1 442.7,396.7 452.2,397.5 462.0,398.5 472.0,399.5 482.2,400.8 492.6,402.1 503.2,403.6 513.9,405.3 524.7,407.0 535.6,408.9 546.6,410.9 557.5,413.1 568.4,415.3 579.3,417.6 590.1,420.1 600.8,422.6 611.3,425.2 621.7,427.9 631.9,430.6 641.9,433.4 651.6,436.2 661.1,439.1 670.2,442.1 679.1,445.0 687.5,448.0 695.6,451.0 703.3,454.0 710.6,457.0 717.5,460.0 723.9,462.9 729.8,465.8 735.2,468.7 740.1,471.6 744.6,474.4 748.4,477.1 751.8,479.8 754.6,482.3 756.8,484.8 758.5,487.3 759.6,489.6 760.1,491.8" fill="none" stroke="#ffff00" stroke-width="2"/>
<line x1="472.6" y1="111.3" x2="767.6" y2="111" stroke="#ffff00" stroke-width="2"/>
<circle cx="472.8" cy="111.5" r="2.4" fill="#ffff00"/><circle cx="767.6" cy="111" r="2.4" fill="#ffff00"/>
<circle cx="546.7" cy="411.5" r="2.2" fill="#ffff00"/><circle cx="556" cy="494.2" r="2.2" fill="#ffff00"/>
<path d="M548 452.5h7M551.5 449v7" stroke="#ffff00" stroke-width="1" fill="none"/>
<g clip-path="url(#co)"><g transform="matrix(1,0.189,0.11,1,319.7,441.7)" fill="none" stroke-width="1.95" stroke-linecap="round" stroke-linejoin="round" stroke="#1414ff"><path transform="translate(0,0)" d="M9.6 0H0V8.6H9.9M0 4.3H7.4"/><path transform="translate(15.9,0)" d="M0 -0.3V8.6M0 5.8C0 1.9 10.9 1.9 10.9 5.8S0 9.7 0 5.8"/><path transform="translate(33.2,0)" d="M0.2 5.6H11.3C11.3 1.8 0.2 1.8 0.2 5.7C0.2 9.2 7.6 9.6 10.8 7.6"/><path transform="translate(50,0)" d="M0 2.9V8.6M0 5.6C0.5 2.1 9.8 2.1 9.8 5.4V8.6"/><path transform="translate(65.6,0)" d="M0.2 5.6H11.3C11.3 1.8 0.2 1.8 0.2 5.7C0.2 9.2 7.6 9.6 10.8 7.6"/><path transform="translate(93.2,0)" d="M0 5.8C0 1.9 11.6 1.9 11.6 5.8S0 9.7 0 5.8Z"/><path transform="translate(111.8,0)" d="M0 -0.3V8.6M0 5.8C0 1.9 10.9 1.9 10.9 5.8S0 9.7 0 5.8"/><path transform="translate(128.4,0)" d="M0.2 5.6H11.3C11.3 1.8 0.2 1.8 0.2 5.7C0.2 9.2 7.6 9.6 10.8 7.6"/><path transform="translate(146.2,0)" d="M0 2.9V8.6M0 5.6C0.5 2.1 9.8 2.1 9.8 5.4V8.6"/></g></g><g clip-path="url(#ce)"><g transform="matrix(1,0.189,0.11,1,319.7,441.7)" fill="none" stroke-width="1.95" stroke-linecap="round" stroke-linejoin="round" stroke="#9a9eb2" stroke-opacity=".75" stroke-width="1.3"><path transform="translate(0,0)" d="M9.6 0H0V8.6H9.9M0 4.3H7.4"/><path transform="translate(15.9,0)" d="M0 -0.3V8.6M0 5.8C0 1.9 10.9 1.9 10.9 5.8S0 9.7 0 5.8"/><path transform="translate(33.2,0)" d="M0.2 5.6H11.3C11.3 1.8 0.2 1.8 0.2 5.7C0.2 9.2 7.6 9.6 10.8 7.6"/><path transform="translate(50,0)" d="M0 2.9V8.6M0 5.6C0.5 2.1 9.8 2.1 9.8 5.4V8.6"/><path transform="translate(65.6,0)" d="M0.2 5.6H11.3C11.3 1.8 0.2 1.8 0.2 5.7C0.2 9.2 7.6 9.6 10.8 7.6"/><path transform="translate(93.2,0)" d="M0 5.8C0 1.9 11.6 1.9 11.6 5.8S0 9.7 0 5.8Z"/><path transform="translate(111.8,0)" d="M0 -0.3V8.6M0 5.8C0 1.9 10.9 1.9 10.9 5.8S0 9.7 0 5.8"/><path transform="translate(128.4,0)" d="M0.2 5.6H11.3C11.3 1.8 0.2 1.8 0.2 5.7C0.2 9.2 7.6 9.6 10.8 7.6"/><path transform="translate(146.2,0)" d="M0 2.9V8.6M0 5.6C0.5 2.1 9.8 2.1 9.8 5.4V8.6"/></g></g>
<text x="510.2" y="138.8" font-family="Liberation Sans, sans-serif" font-size="22" fill="#ffff00">Skizze2</text>
<text x="658.2" y="498.8" font-family="Liberation Sans, sans-serif" font-size="22" fill="#ffff00">Skizze1</text>
<g transform="matrix(1,0.189,0.11,1,755.1,93.4)" fill="none" stroke-width="1.95" stroke-linecap="round" stroke-linejoin="round" stroke="#1414ff"><path transform="translate(0,0)" d="M9.6 0H0V8.6H9.9M0 4.3H7.4"/><path transform="translate(15,0)" d="M0 -0.3V8.6M0 5.8C0 1.9 10.9 1.9 10.9 5.8S0 9.7 0 5.8"/><path transform="translate(32.4,0)" d="M0.2 5.6H11.3C11.3 1.8 0.2 1.8 0.2 5.7C0.2 9.2 7.6 9.6 10.8 7.6"/><path transform="translate(49.9,0)" d="M0 2.9V8.6M0 5.6C0.5 2.1 9.8 2.1 9.8 5.4V8.6"/><path transform="translate(65.5,0)" d="M0.2 5.6H11.3C11.3 1.8 0.2 1.8 0.2 5.7C0.2 9.2 7.6 9.6 10.8 7.6"/><path transform="translate(84.9,0)" d="M0 0.8L3.8 0V8.6"/></g>
</svg>
</div>
<div id="panel">
<div id="tabs"></div><div id="tabline"></div>
<div class="tab act"></div><div class="tab" style="left:27px"></div><div class="tab" style="left:55px"></div><div class="tab" style="left:83px"></div>
<svg class="ico" style="left:4px;top:4px" width="16" height="16" overflow="visible"><use href="#i-part"/></svg><svg class="ico" style="left:31px;top:3px" width="16" height="16" overflow="visible"><use href="#i-tab-prop"/></svg><svg class="ico" style="left:58px;top:3px" width="16" height="16" overflow="visible"><use href="#i-tab-conf"/></svg><svg class="ico" style="left:88px;top:4px" width="16" height="16" overflow="visible"><use href="#i-tab-dim"/></svg>
<svg style="position:absolute;left:228px;top:5px" width="14" height="14"><path d="M2.6 3L6 6.6 2.6 10.2M7.2 3L10.6 6.6 7.2 10.2" fill="none" stroke="#565a70" stroke-width="1.4"/></svg>
<div id="search"></div>
<i class="vd" style="left:9px;top:63px;height:317px"></i><i class="vd" style="left:28px;top:260px;height:30px"></i><i class="vd" style="left:28px;top:314px;height:12px"></i><i class="vd" style="left:28px;top:350px;height:12px"></i><svg class="ico" style="left:1px;top:46px" width="16" height="16" overflow="visible"><use href="#i-part"/></svg><span class="t" style="left:22px;top:45px">Teil1</span>
<i class="hd" style="left:11px;top:73px;width:9px"></i><svg class="ico" style="left:20px;top:64px" width="16" height="16" overflow="visible"><use href="#i-fold-sens"/></svg><span class="t" style="left:41px;top:63px">Sensoren</span>
<i class="hd" style="left:15px;top:91px;width:5px"></i><svg class="ico" style="left:20px;top:82px" width="16" height="16" overflow="visible"><use href="#i-fold-a"/></svg><span class="t" style="left:41px;top:81px">Beschriftungen</span>
<span class="exp" style="top:87px"><i class="h"></i><i class="v"></i></span>
<i class="hd" style="left:15px;top:109px;width:5px"></i><svg class="ico" style="left:20px;top:100px" width="16" height="16" overflow="visible"><use href="#i-fold-vol"/></svg><span class="t" style="left:41px;top:99px">Volumenkörper(1)</span>
<span class="exp" style="top:105px"><i class="h"></i><i class="v"></i></span>
<i class="hd" style="left:15px;top:127px;width:5px"></i><svg class="ico" style="left:20px;top:118px" width="16" height="16" overflow="visible"><use href="#i-fold-light"/></svg><span class="t" style="left:41px;top:117px">Beleuchtung, Kameras und Bühne</span>
<span class="exp" style="top:123px"><i class="h"></i><i class="v"></i></span>
<i class="hd" style="left:11px;top:145px;width:9px"></i><svg class="ico" style="left:20px;top:136px" width="16" height="16" overflow="visible"><use href="#i-mat"/></svg><span class="t" style="left:41px;top:135px">Material &lt;nicht festgelegt&gt;</span>
<i class="hd" style="left:11px;top:163px;width:9px"></i><svg class="ico" style="left:20px;top:154px" width="16" height="16" overflow="visible"><use href="#i-plane"/></svg><span class="t" style="left:41px;top:153px">Ebene vorne</span>
<i class="hd" style="left:11px;top:181px;width:9px"></i><svg class="ico" style="left:20px;top:172px" width="16" height="16" overflow="visible"><use href="#i-planey"/></svg><span class="t" style="left:41px;top:171px">Ebene oben</span>
<i class="hd" style="left:11px;top:199px;width:9px"></i><svg class="ico" style="left:20px;top:190px" width="16" height="16" overflow="visible"><use href="#i-plane"/></svg><span class="t" style="left:41px;top:189px">Ebene rechts</span>
<i class="hd" style="left:11px;top:217px;width:9px"></i><svg class="ico" style="left:20px;top:208px" width="16" height="16" overflow="visible"><use href="#i-origin"/></svg><span class="t" style="left:41px;top:207px">Ursprung</span>
<i class="hd" style="left:11px;top:235px;width:9px"></i><svg class="ico" style="left:20px;top:226px" width="16" height="16" overflow="visible"><use href="#i-planey"/></svg><span class="t" style="left:41px;top:225px">Ebene1</span>
<i class="hd" style="left:15px;top:253px;width:5px"></i><svg class="ico" style="left:20px;top:244px" width="16" height="16" overflow="visible"><use href="#i-loft"/></svg><span class="t" style="left:41px;top:243px">Oberfläche-Ausformung1</span>
<span class="exp" style="top:249px"><i class="h"></i></span>
<i class="hd" style="left:29px;top:271px;width:9px"></i><svg class="ico" style="left:38px;top:262px" width="16" height="16" overflow="visible"><use href="#i-sk2"/></svg><span class="t" style="left:60px;top:261px">(-) Skizze2</span>
<i class="hd" style="left:29px;top:289px;width:9px"></i><svg class="ico" style="left:38px;top:280px" width="16" height="16" overflow="visible"><use href="#i-sk1"/></svg><span class="t" style="left:60px;top:279px">Skizze1</span>
<i class="hd" style="left:15px;top:307px;width:5px"></i><svg class="ico" style="left:20px;top:298px" width="16" height="16" overflow="visible"><use href="#i-loft"/></svg><span class="t" style="left:41px;top:297px">Oberfläche-Ausformung2</span>
<span class="exp" style="top:303px"><i class="h"></i></span>
<i class="hd" style="left:29px;top:325px;width:9px"></i><svg class="ico" style="left:38px;top:316px" width="16" height="16" overflow="visible"><use href="#i-sk1"/></svg><span class="t" style="left:60px;top:315px">Skizze1</span>
<i class="hd" style="left:15px;top:343px;width:5px"></i><svg class="ico" style="left:20px;top:334px" width="16" height="16" overflow="visible"><use href="#i-surf"/></svg><span class="t" style="left:41px;top:333px">Oberfläche-Ebene2</span>
<span class="exp" style="top:339px"><i class="h"></i></span>
<i class="hd" style="left:29px;top:361px;width:9px"></i><svg class="ico" style="left:38px;top:352px" width="16" height="16" overflow="visible"><use href="#i-sk3"/></svg><span class="t" style="left:60px;top:351px">Skizze1</span>
<i class="hd" style="left:11px;top:379px;width:9px"></i><svg class="ico" style="left:20px;top:370px" width="16" height="16" overflow="visible"><use href="#i-knit"/></svg><span class="t" style="left:41px;top:369px">Oberfläche-Zusammenfügen1</span>

<div id="lstrip"></div><div id="bline"></div>
</div>
<div id="edge1"></div><div id="edge2"></div>
<div id="hbg"></div><div id="handle"><i style="top:2.5px"></i><i style="top:10.5px"></i><i style="top:18.5px"></i></div>
</body></html>
